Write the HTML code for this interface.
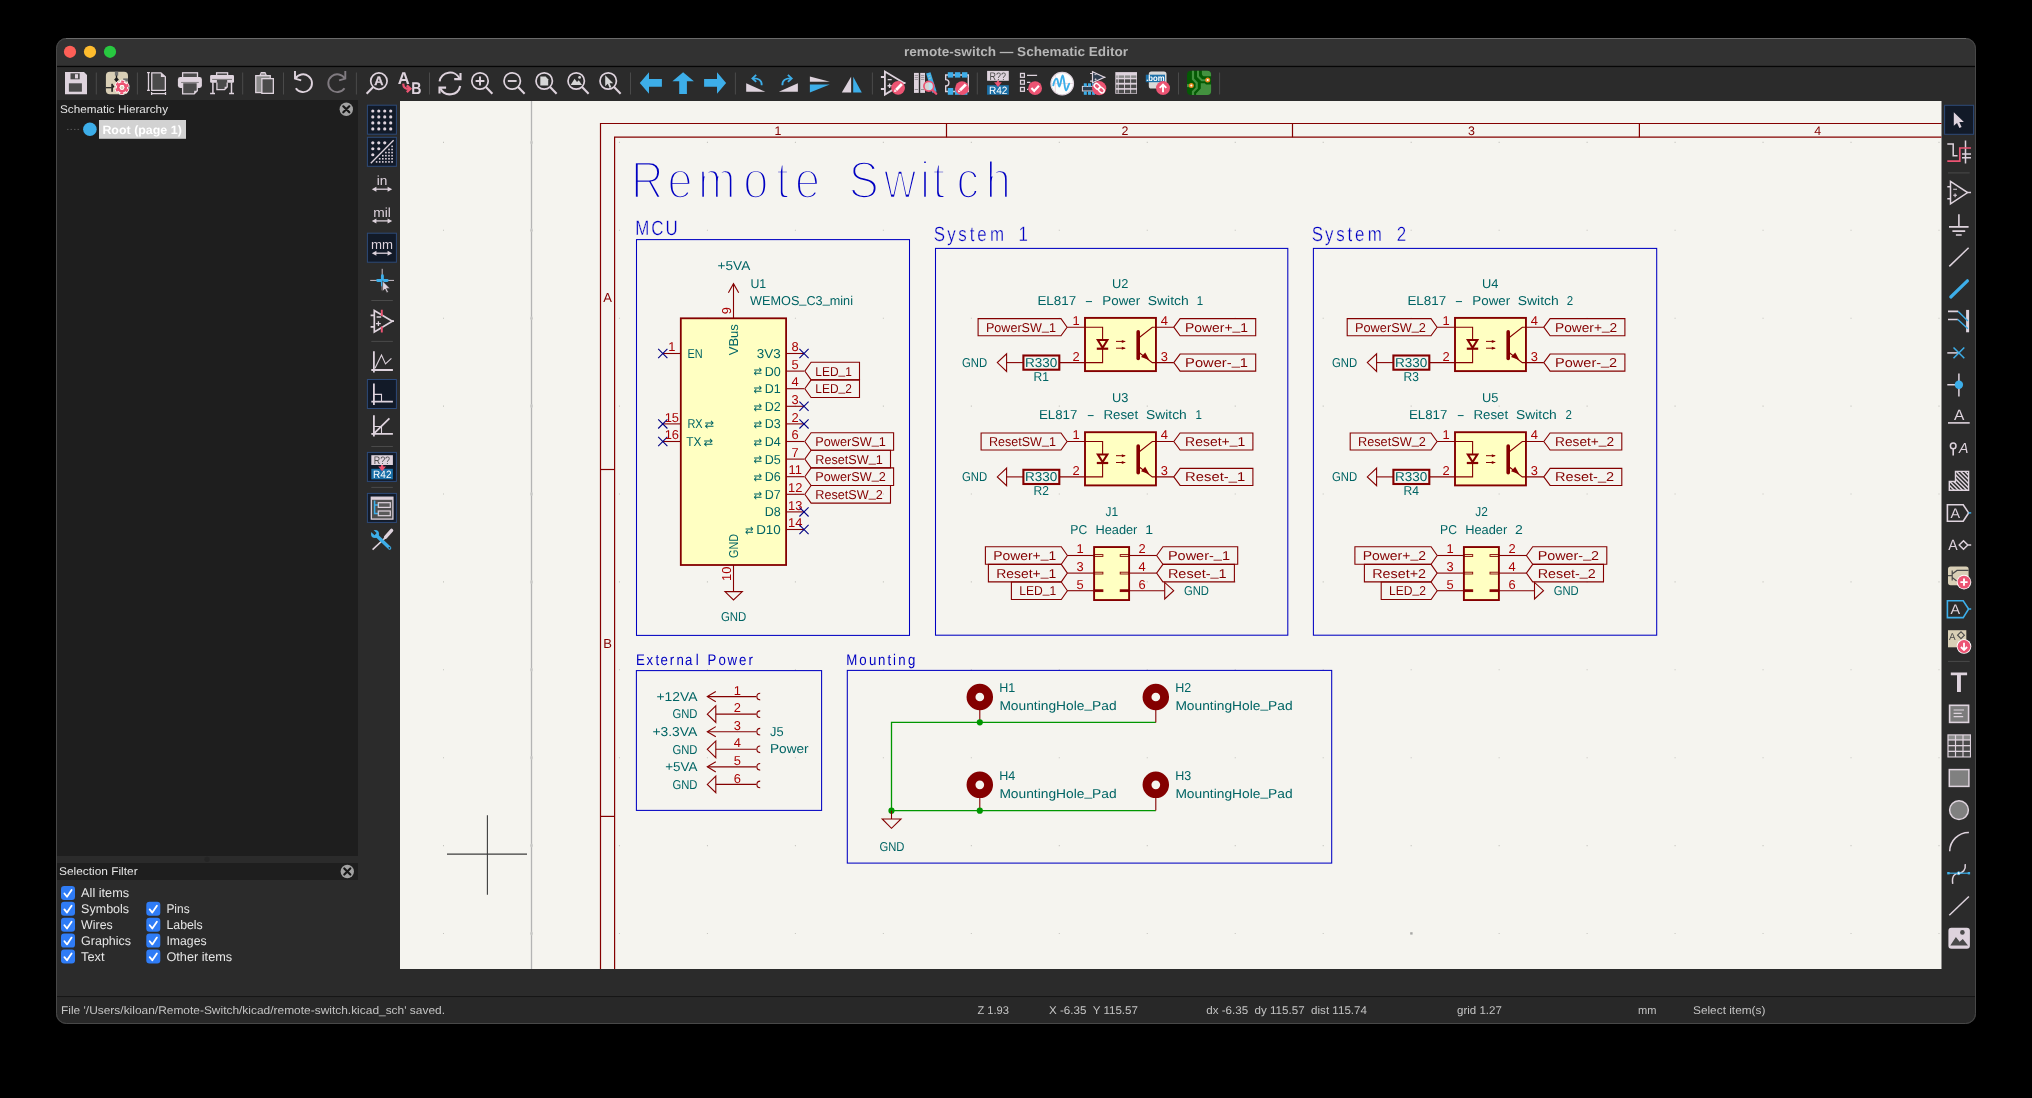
<!DOCTYPE html><html><head><meta charset="utf-8"><title>remote-switch — Schematic Editor</title>
<style>html,body{margin:0;padding:0;background:#000;width:2032px;height:1098px;overflow:hidden}svg{display:block}body>svg{will-change:transform}text{font-family:"Liberation Sans","DejaVu Sans",sans-serif;text-rendering:geometricPrecision}</style></head><body>
<svg width="2032" height="1098" viewBox="0 0 2032 1098">
<rect width="2032" height="1098" fill="#000"/>
<rect x="56" y="38" width="1920" height="986" rx="10.5" fill="#2b2b2b"/>
<clipPath id="wc"><rect x="56" y="38" width="1920" height="986" rx="10.5"/></clipPath>
<g clip-path="url(#wc)">
<rect x="56" y="38" width="1920" height="28.4" fill="#323232"/>
<rect x="56" y="65.8" width="1920" height="1.5" fill="#060606"/>
<rect x="56" y="67.3" width="1920" height="33" fill="#2b2b2b"/>
<rect x="56" y="100" width="302" height="756" fill="#1e1e1e"/>
<rect x="56" y="863" width="302" height="17" fill="#1e1e1e"/>
<circle cx="207" cy="859.3" r="2.6" fill="#252525"/>
<rect x="400" y="101" width="1541.5" height="868" fill="#f5f4ef"/>
<rect x="56" y="996" width="1920" height="1.2" fill="#161616"/>
<rect x="56" y="997.2" width="1920" height="27" fill="#282828"/>
</g>
<rect x="56.5" y="38.5" width="1919" height="985" rx="10" fill="none" stroke="#484848" stroke-width="1"/>
<path d="M66 38.5H1966" stroke="#6a6a6a" stroke-width="1"/>
<circle cx="70" cy="51.8" r="6.1" fill="#fe5f57"/>
<circle cx="90" cy="51.8" r="6.1" fill="#febc2e"/>
<circle cx="110" cy="51.8" r="6.1" fill="#28c840"/>
<text x="1016" y="56.2" font-size="13" fill="#b6b6b6" text-anchor="middle" textLength="224" lengthAdjust="spacingAndGlyphs" font-weight="bold">remote-switch — Schematic Editor</text>
<line x1="96.3" y1="72.5" x2="96.3" y2="94.5" stroke="#4a4a4a" stroke-width="1"/>
<line x1="137.4" y1="72.5" x2="137.4" y2="94.5" stroke="#4a4a4a" stroke-width="1"/>
<line x1="242.7" y1="72.5" x2="242.7" y2="94.5" stroke="#4a4a4a" stroke-width="1"/>
<line x1="283.5" y1="72.5" x2="283.5" y2="94.5" stroke="#4a4a4a" stroke-width="1"/>
<line x1="356.4" y1="72.5" x2="356.4" y2="94.5" stroke="#4a4a4a" stroke-width="1"/>
<line x1="429.5" y1="72.5" x2="429.5" y2="94.5" stroke="#4a4a4a" stroke-width="1"/>
<line x1="630.5" y1="72.5" x2="630.5" y2="94.5" stroke="#4a4a4a" stroke-width="1"/>
<line x1="735.4" y1="72.5" x2="735.4" y2="94.5" stroke="#4a4a4a" stroke-width="1"/>
<line x1="872.4" y1="72.5" x2="872.4" y2="94.5" stroke="#4a4a4a" stroke-width="1"/>
<line x1="977.3" y1="72.5" x2="977.3" y2="94.5" stroke="#4a4a4a" stroke-width="1"/>
<line x1="1178.5" y1="72.5" x2="1178.5" y2="94.5" stroke="#4a4a4a" stroke-width="1"/>
<line x1="1219.6" y1="72.5" x2="1219.6" y2="94.5" stroke="#4a4a4a" stroke-width="1"/>
<text x="60" y="113" font-size="11.2" fill="#e4e4e4" textLength="108" lengthAdjust="spacingAndGlyphs">Schematic Hierarchy</text>
<circle cx="346.3" cy="109.3" r="6.7" fill="#a2a2a2"/>
<path d="M343.3 106.3l6 6m0 -6l-6 6" stroke="#161616" stroke-width="2.2" fill="none" stroke-linecap="round"/>
<line x1="67" y1="129.4" x2="81" y2="129.4" stroke="#5a5a5a" stroke-width="1" stroke-dasharray="1.5 2"/>
<circle cx="89.9" cy="129.2" r="6.8" fill="#3daee9"/>
<rect x="99" y="120" width="87" height="18.8" fill="#d2d2d2"/>
<text x="102.4" y="133.6" font-size="12" fill="#ffffff" textLength="79.4" lengthAdjust="spacingAndGlyphs" font-weight="bold">Root (page 1)</text>
<text x="59" y="875.2" font-size="11.2" fill="#e4e4e4" textLength="78.6" lengthAdjust="spacingAndGlyphs">Selection Filter</text>
<circle cx="347.3" cy="871.5" r="6.7" fill="#a2a2a2"/>
<path d="M344.3 868.5l6 6m0 -6l-6 6" stroke="#161616" stroke-width="2.2" fill="none" stroke-linecap="round"/>
<rect x="61" y="885.9" width="14" height="14" rx="3.2" fill="#2f7cf6"/>
<path d="M64.4 893.5l2.6 3.2l4.6 -6.8" stroke="#ffffff" stroke-width="1.8" fill="none" stroke-linecap="round" stroke-linejoin="round"/>
<text x="81.1" y="897.3" font-size="12.6" fill="#e6e6e6" textLength="48" lengthAdjust="spacingAndGlyphs">All items</text>
<rect x="61" y="901.8" width="14" height="14" rx="3.2" fill="#2f7cf6"/>
<path d="M64.4 909.4l2.6 3.2l4.6 -6.8" stroke="#ffffff" stroke-width="1.8" fill="none" stroke-linecap="round" stroke-linejoin="round"/>
<text x="81.1" y="913.2" font-size="12.6" fill="#e6e6e6" textLength="48" lengthAdjust="spacingAndGlyphs">Symbols</text>
<rect x="61" y="917.7" width="14" height="14" rx="3.2" fill="#2f7cf6"/>
<path d="M64.4 925.3l2.6 3.2l4.6 -6.8" stroke="#ffffff" stroke-width="1.8" fill="none" stroke-linecap="round" stroke-linejoin="round"/>
<text x="81.1" y="929.1" font-size="12.6" fill="#e6e6e6" textLength="31.6" lengthAdjust="spacingAndGlyphs">Wires</text>
<rect x="61" y="933.6" width="14" height="14" rx="3.2" fill="#2f7cf6"/>
<path d="M64.4 941.2l2.6 3.2l4.6 -6.8" stroke="#ffffff" stroke-width="1.8" fill="none" stroke-linecap="round" stroke-linejoin="round"/>
<text x="81.1" y="945" font-size="12.6" fill="#e6e6e6" textLength="50" lengthAdjust="spacingAndGlyphs">Graphics</text>
<rect x="61" y="949.5" width="14" height="14" rx="3.2" fill="#2f7cf6"/>
<path d="M64.4 957.1l2.6 3.2l4.6 -6.8" stroke="#ffffff" stroke-width="1.8" fill="none" stroke-linecap="round" stroke-linejoin="round"/>
<text x="81.1" y="960.9" font-size="12.6" fill="#e6e6e6" textLength="23.4" lengthAdjust="spacingAndGlyphs">Text</text>
<rect x="146.3" y="901.8" width="14" height="14" rx="3.2" fill="#2f7cf6"/>
<path d="M149.7 909.4l2.6 3.2l4.6 -6.8" stroke="#ffffff" stroke-width="1.8" fill="none" stroke-linecap="round" stroke-linejoin="round"/>
<text x="166.4" y="913.2" font-size="12.6" fill="#e6e6e6" textLength="23.2" lengthAdjust="spacingAndGlyphs">Pins</text>
<rect x="146.3" y="917.7" width="14" height="14" rx="3.2" fill="#2f7cf6"/>
<path d="M149.7 925.3l2.6 3.2l4.6 -6.8" stroke="#ffffff" stroke-width="1.8" fill="none" stroke-linecap="round" stroke-linejoin="round"/>
<text x="166.4" y="929.1" font-size="12.6" fill="#e6e6e6" textLength="36.4" lengthAdjust="spacingAndGlyphs">Labels</text>
<rect x="146.3" y="933.6" width="14" height="14" rx="3.2" fill="#2f7cf6"/>
<path d="M149.7 941.2l2.6 3.2l4.6 -6.8" stroke="#ffffff" stroke-width="1.8" fill="none" stroke-linecap="round" stroke-linejoin="round"/>
<text x="166.4" y="945" font-size="12.6" fill="#e6e6e6" textLength="40.2" lengthAdjust="spacingAndGlyphs">Images</text>
<rect x="146.3" y="949.5" width="14" height="14" rx="3.2" fill="#2f7cf6"/>
<path d="M149.7 957.1l2.6 3.2l4.6 -6.8" stroke="#ffffff" stroke-width="1.8" fill="none" stroke-linecap="round" stroke-linejoin="round"/>
<text x="166.4" y="960.9" font-size="12.6" fill="#e6e6e6" textLength="65.8" lengthAdjust="spacingAndGlyphs">Other items</text>
<text x="61" y="1014" font-size="11.2" fill="#c4c4c4" textLength="384" lengthAdjust="spacingAndGlyphs" xml:space="preserve">File '/Users/kiloan/Remote-Switch/kicad/remote-switch.kicad_sch' saved.</text>
<text x="977.4" y="1014" font-size="11.2" fill="#c4c4c4" textLength="31.6" lengthAdjust="spacingAndGlyphs" xml:space="preserve">Z 1.93</text>
<text x="1049" y="1014" font-size="11.2" fill="#c4c4c4" textLength="89" lengthAdjust="spacingAndGlyphs" xml:space="preserve">X -6.35  Y 115.57</text>
<text x="1206.2" y="1014" font-size="11.2" fill="#c4c4c4" textLength="160.8" lengthAdjust="spacingAndGlyphs" xml:space="preserve">dx -6.35  dy 115.57  dist 115.74</text>
<text x="1457" y="1014" font-size="11.2" fill="#c4c4c4" textLength="44.8" lengthAdjust="spacingAndGlyphs" xml:space="preserve">grid 1.27</text>
<text x="1638.1" y="1014" font-size="11.2" fill="#c4c4c4" textLength="18.4" lengthAdjust="spacingAndGlyphs" xml:space="preserve">mm</text>
<text x="1693" y="1014" font-size="11.2" fill="#c4c4c4" textLength="72.4" lengthAdjust="spacingAndGlyphs" xml:space="preserve">Select item(s)</text>
<svg x="400" y="101" width="1541.5" height="868" viewBox="400 101 1541.5 868">
<line x1="531.5" y1="101" x2="531.5" y2="969" stroke="#b4b4b4" stroke-width="1.3"/>
<path d="M443 142.4h1M443 230.3h1M443 318.2h1M443 406.1h1M443 494h1M443 581.9h1M443 669.8h1M443 757.7h1M443 845.6h1M443 933.5h1M530.97 142.4h1M530.97 230.3h1M530.97 318.2h1M530.97 406.1h1M530.97 494h1M530.97 581.9h1M530.97 669.8h1M530.97 757.7h1M530.97 845.6h1M530.97 933.5h1M618.94 142.4h1M618.94 230.3h1M618.94 318.2h1M618.94 406.1h1M618.94 494h1M618.94 581.9h1M618.94 669.8h1M618.94 757.7h1M618.94 845.6h1M618.94 933.5h1M706.91 142.4h1M706.91 230.3h1M706.91 318.2h1M706.91 406.1h1M706.91 494h1M706.91 581.9h1M706.91 669.8h1M706.91 757.7h1M706.91 845.6h1M706.91 933.5h1M794.88 142.4h1M794.88 230.3h1M794.88 318.2h1M794.88 406.1h1M794.88 494h1M794.88 581.9h1M794.88 669.8h1M794.88 757.7h1M794.88 845.6h1M794.88 933.5h1M882.85 142.4h1M882.85 230.3h1M882.85 318.2h1M882.85 406.1h1M882.85 494h1M882.85 581.9h1M882.85 669.8h1M882.85 757.7h1M882.85 845.6h1M882.85 933.5h1M970.82 142.4h1M970.82 230.3h1M970.82 318.2h1M970.82 406.1h1M970.82 494h1M970.82 581.9h1M970.82 669.8h1M970.82 757.7h1M970.82 845.6h1M970.82 933.5h1M1058.79 142.4h1M1058.79 230.3h1M1058.79 318.2h1M1058.79 406.1h1M1058.79 494h1M1058.79 581.9h1M1058.79 669.8h1M1058.79 757.7h1M1058.79 845.6h1M1058.79 933.5h1M1146.76 142.4h1M1146.76 230.3h1M1146.76 318.2h1M1146.76 406.1h1M1146.76 494h1M1146.76 581.9h1M1146.76 669.8h1M1146.76 757.7h1M1146.76 845.6h1M1146.76 933.5h1M1234.73 142.4h1M1234.73 230.3h1M1234.73 318.2h1M1234.73 406.1h1M1234.73 494h1M1234.73 581.9h1M1234.73 669.8h1M1234.73 757.7h1M1234.73 845.6h1M1234.73 933.5h1M1322.7 142.4h1M1322.7 230.3h1M1322.7 318.2h1M1322.7 406.1h1M1322.7 494h1M1322.7 581.9h1M1322.7 669.8h1M1322.7 757.7h1M1322.7 845.6h1M1322.7 933.5h1M1410.67 142.4h1M1410.67 230.3h1M1410.67 318.2h1M1410.67 406.1h1M1410.67 494h1M1410.67 581.9h1M1410.67 669.8h1M1410.67 757.7h1M1410.67 845.6h1M1410.67 933.5h1M1498.64 142.4h1M1498.64 230.3h1M1498.64 318.2h1M1498.64 406.1h1M1498.64 494h1M1498.64 581.9h1M1498.64 669.8h1M1498.64 757.7h1M1498.64 845.6h1M1498.64 933.5h1M1586.61 142.4h1M1586.61 230.3h1M1586.61 318.2h1M1586.61 406.1h1M1586.61 494h1M1586.61 581.9h1M1586.61 669.8h1M1586.61 757.7h1M1586.61 845.6h1M1586.61 933.5h1M1674.58 142.4h1M1674.58 230.3h1M1674.58 318.2h1M1674.58 406.1h1M1674.58 494h1M1674.58 581.9h1M1674.58 669.8h1M1674.58 757.7h1M1674.58 845.6h1M1674.58 933.5h1M1762.55 142.4h1M1762.55 230.3h1M1762.55 318.2h1M1762.55 406.1h1M1762.55 494h1M1762.55 581.9h1M1762.55 669.8h1M1762.55 757.7h1M1762.55 845.6h1M1762.55 933.5h1M1850.52 142.4h1M1850.52 230.3h1M1850.52 318.2h1M1850.52 406.1h1M1850.52 494h1M1850.52 581.9h1M1850.52 669.8h1M1850.52 757.7h1M1850.52 845.6h1M1850.52 933.5h1M1938.49 142.4h1M1938.49 230.3h1M1938.49 318.2h1M1938.49 406.1h1M1938.49 494h1M1938.49 581.9h1M1938.49 669.8h1M1938.49 757.7h1M1938.49 845.6h1M1938.49 933.5h1" stroke="#c4c3be" stroke-width="1.1" fill="none"/>
<ellipse cx="531.5" cy="142.4" rx="1.3" ry="2" fill="#c9c9c7"/>
<ellipse cx="531.5" cy="230.3" rx="1.3" ry="2" fill="#c9c9c7"/>
<ellipse cx="531.5" cy="318.2" rx="1.3" ry="2" fill="#c9c9c7"/>
<ellipse cx="531.5" cy="406.1" rx="1.3" ry="2" fill="#c9c9c7"/>
<ellipse cx="531.5" cy="494" rx="1.3" ry="2" fill="#c9c9c7"/>
<ellipse cx="531.5" cy="581.9" rx="1.3" ry="2" fill="#c9c9c7"/>
<ellipse cx="531.5" cy="669.8" rx="1.3" ry="2" fill="#c9c9c7"/>
<ellipse cx="531.5" cy="757.7" rx="1.3" ry="2" fill="#c9c9c7"/>
<ellipse cx="531.5" cy="845.6" rx="1.3" ry="2" fill="#c9c9c7"/>
<ellipse cx="531.5" cy="933.5" rx="1.3" ry="2" fill="#c9c9c7"/>
<rect x="1410.2" y="932.2" width="2.4" height="2.4" fill="#a8a8a6"/>
<path d="M2000 123.5H600.5V1000M2000 137.2H614.6V1000" stroke="#840000" stroke-width="1.2" fill="none"/>
<line x1="946.5" y1="123.5" x2="946.5" y2="137.2" stroke="#840000" stroke-width="1.2"/>
<line x1="1292.5" y1="123.5" x2="1292.5" y2="137.2" stroke="#840000" stroke-width="1.2"/>
<line x1="1639.4" y1="123.5" x2="1639.4" y2="137.2" stroke="#840000" stroke-width="1.2"/>
<line x1="600.5" y1="469.5" x2="614.6" y2="469.5" stroke="#840000" stroke-width="1.2"/>
<line x1="600.5" y1="816.4" x2="614.6" y2="816.4" stroke="#840000" stroke-width="1.2"/>
<text x="778" y="134.7" font-size="12.4" fill="#840000" text-anchor="middle">1</text>
<text x="1125" y="134.7" font-size="12.4" fill="#840000" text-anchor="middle">2</text>
<text x="1471.4" y="134.7" font-size="12.4" fill="#840000" text-anchor="middle">3</text>
<text x="1817.6" y="134.7" font-size="12.4" fill="#840000" text-anchor="middle">4</text>
<text x="607.5" y="301.8" font-size="13" fill="#840000" text-anchor="middle">A</text>
<text x="607.7" y="647.6" font-size="13" fill="#840000" text-anchor="middle">B</text>
<line x1="487.4" y1="815.2" x2="487.4" y2="894.7" stroke="#3c3c3c" stroke-width="1.1"/>
<line x1="447" y1="854.1" x2="527" y2="854.1" stroke="#3c3c3c" stroke-width="1.1"/>
<text transform="scale(0.86 1)" x="733.72 776.05 811.63 864.19 902.67 924.3 955.81 986.98 1027.56 1069.88 1084.42 1112.33 1146.28" y="198.2" font-size="52.4" fill="#0000c2" stroke="#f5f4ef" stroke-width="2.7">Remote Switch</text>
<rect x="636.5" y="239.6" width="273" height="395.8" stroke="#0000c2" stroke-width="1.05" fill="none"/>
<text transform="scale(0.82 1)" x="774.71 794.26 811.71" y="235.2" font-size="20.6" fill="#0000c2" stroke="#f5f4ef" stroke-width="0.3">MCU</text>
<rect x="680.8" y="318.3" width="105.3" height="246.7" stroke="#840000" stroke-width="1.8" fill="#ffffc2"/>
<line x1="733.5" y1="318.3" x2="733.5" y2="283.9" stroke="#840000" stroke-width="1.1"/>
<path d="M728.4 292.8L733.5 283.7L738.7 292.8" stroke="#840000" stroke-width="1.1" fill="none"/>
<text x="733.9" y="270" font-size="12.9" fill="#006464" text-anchor="middle" textLength="32.6" lengthAdjust="spacingAndGlyphs">+5VA</text>
<text x="731.3" y="310.6" font-size="12.9" fill="#a90000" text-anchor="middle" transform="rotate(-90 731.3 310.6)">9</text>
<text x="750.4" y="287.7" font-size="12.9" fill="#006464" textLength="15.8" lengthAdjust="spacingAndGlyphs">U1</text>
<text x="750" y="304.7" font-size="12.9" fill="#006464" textLength="103" lengthAdjust="spacingAndGlyphs">WEMOS<tspan dy="-1.7">_</tspan><tspan dy="1.7">C</tspan>3<tspan dy="-1.7">_</tspan><tspan dy="1.7">m</tspan>ini</text>
<text x="738" y="355.3" font-size="12.9" fill="#006464" textLength="31.2" lengthAdjust="spacingAndGlyphs" transform="rotate(-90 738 355.3)">VBus</text>
<text x="738" y="558" font-size="12.9" fill="#006464" textLength="24" lengthAdjust="spacingAndGlyphs" transform="rotate(-90 738 558)">GND</text>
<line x1="680.8" y1="353.5" x2="662.8" y2="353.5" stroke="#840000" stroke-width="1.1"/>
<path d="M658.2 348.9L667.4 358.1M658.2 358.1L667.4 348.9" stroke="#000084" stroke-width="1.1" fill="none"/>
<text x="671.8" y="351.3" font-size="12.9" fill="#a90000" text-anchor="middle">1</text>
<text x="687.4" y="358" font-size="12.9" fill="#006464" textLength="15.2" lengthAdjust="spacingAndGlyphs">EN</text>
<line x1="680.8" y1="423.9" x2="662.8" y2="423.9" stroke="#840000" stroke-width="1.1"/>
<path d="M658.2 419.3L667.4 428.5M658.2 428.5L667.4 419.3" stroke="#000084" stroke-width="1.1" fill="none"/>
<text x="671.8" y="421.7" font-size="12.9" fill="#a90000" text-anchor="middle">15</text>
<text x="687.4" y="428.4" font-size="12.9" fill="#006464" textLength="15.2" lengthAdjust="spacingAndGlyphs">RX</text>
<text x="704.6" y="428.4" font-size="11" fill="#006464" textLength="9.6" lengthAdjust="spacingAndGlyphs">⇄</text>
<line x1="680.8" y1="441.5" x2="662.8" y2="441.5" stroke="#840000" stroke-width="1.1"/>
<path d="M658.2 436.9L667.4 446.1M658.2 446.1L667.4 436.9" stroke="#000084" stroke-width="1.1" fill="none"/>
<text x="671.8" y="439.3" font-size="12.9" fill="#a90000" text-anchor="middle">16</text>
<text x="686.2" y="446" font-size="12.9" fill="#006464" textLength="15.2" lengthAdjust="spacingAndGlyphs">TX</text>
<text x="703.4" y="446" font-size="11" fill="#006464" textLength="9.6" lengthAdjust="spacingAndGlyphs">⇄</text>
<line x1="786.1" y1="353.5" x2="804" y2="353.5" stroke="#840000" stroke-width="1.1"/>
<text x="795.2" y="351.2" font-size="12.9" fill="#a90000" text-anchor="middle">8</text>
<text x="780.8" y="358" font-size="12.9" fill="#006464" text-anchor="end" textLength="24" lengthAdjust="spacingAndGlyphs">3V3</text>
<path d="M799.4 348.9L808.6 358.1M799.4 358.1L808.6 348.9" stroke="#000084" stroke-width="1.1" fill="none"/>
<line x1="786.1" y1="371.1" x2="804" y2="371.1" stroke="#840000" stroke-width="1.1"/>
<text x="795.2" y="368.8" font-size="12.9" fill="#a90000" text-anchor="middle">5</text>
<text x="780.8" y="375.6" font-size="12.9" fill="#006464" text-anchor="end" textLength="16" lengthAdjust="spacingAndGlyphs">D0</text>
<text x="762.2" y="375.4" font-size="11" fill="#006464" text-anchor="end" textLength="8.6" lengthAdjust="spacingAndGlyphs">⇄</text>
<polygon points="804.8,371.1 811.1,362.3 859.5,362.3 859.5,379.9 811.1,379.9" fill="none" stroke="#840000" stroke-width="1.1"/>
<text x="815.3" y="375.5" font-size="12.9" fill="#840000" textLength="36.5" lengthAdjust="spacingAndGlyphs">LED<tspan dy="-1.7">_</tspan><tspan dy="1.7">1</tspan></text>
<line x1="786.1" y1="388.7" x2="804" y2="388.7" stroke="#840000" stroke-width="1.1"/>
<text x="795.2" y="386.4" font-size="12.9" fill="#a90000" text-anchor="middle">4</text>
<text x="780.8" y="393.2" font-size="12.9" fill="#006464" text-anchor="end" textLength="16" lengthAdjust="spacingAndGlyphs">D1</text>
<text x="762.2" y="393" font-size="11" fill="#006464" text-anchor="end" textLength="8.6" lengthAdjust="spacingAndGlyphs">⇄</text>
<polygon points="804.8,388.7 811.1,379.9 859.5,379.9 859.5,397.5 811.1,397.5" fill="none" stroke="#840000" stroke-width="1.1"/>
<text x="815.3" y="393.1" font-size="12.9" fill="#840000" textLength="36.5" lengthAdjust="spacingAndGlyphs">LED<tspan dy="-1.7">_</tspan><tspan dy="1.7">2</tspan></text>
<line x1="786.1" y1="406.3" x2="804" y2="406.3" stroke="#840000" stroke-width="1.1"/>
<text x="795.2" y="404" font-size="12.9" fill="#a90000" text-anchor="middle">3</text>
<text x="780.8" y="410.8" font-size="12.9" fill="#006464" text-anchor="end" textLength="16" lengthAdjust="spacingAndGlyphs">D2</text>
<text x="762.2" y="410.6" font-size="11" fill="#006464" text-anchor="end" textLength="8.6" lengthAdjust="spacingAndGlyphs">⇄</text>
<path d="M799.4 401.7L808.6 410.9M799.4 410.9L808.6 401.7" stroke="#000084" stroke-width="1.1" fill="none"/>
<line x1="786.1" y1="423.9" x2="804" y2="423.9" stroke="#840000" stroke-width="1.1"/>
<text x="795.2" y="421.6" font-size="12.9" fill="#a90000" text-anchor="middle">2</text>
<text x="780.8" y="428.4" font-size="12.9" fill="#006464" text-anchor="end" textLength="16" lengthAdjust="spacingAndGlyphs">D3</text>
<text x="762.2" y="428.2" font-size="11" fill="#006464" text-anchor="end" textLength="8.6" lengthAdjust="spacingAndGlyphs">⇄</text>
<path d="M799.4 419.3L808.6 428.5M799.4 428.5L808.6 419.3" stroke="#000084" stroke-width="1.1" fill="none"/>
<line x1="786.1" y1="441.5" x2="804" y2="441.5" stroke="#840000" stroke-width="1.1"/>
<text x="795.2" y="439.2" font-size="12.9" fill="#a90000" text-anchor="middle">6</text>
<text x="780.8" y="446" font-size="12.9" fill="#006464" text-anchor="end" textLength="16" lengthAdjust="spacingAndGlyphs">D4</text>
<text x="762.2" y="445.8" font-size="11" fill="#006464" text-anchor="end" textLength="8.6" lengthAdjust="spacingAndGlyphs">⇄</text>
<polygon points="804.8,441.5 811.1,432.7 893.6,432.7 893.6,450.3 811.1,450.3" fill="none" stroke="#840000" stroke-width="1.1"/>
<text x="815.3" y="445.9" font-size="12.9" fill="#840000" textLength="70.6" lengthAdjust="spacingAndGlyphs">PowerSW<tspan dy="-1.7">_</tspan><tspan dy="1.7">1</tspan></text>
<line x1="786.1" y1="459.1" x2="804" y2="459.1" stroke="#840000" stroke-width="1.1"/>
<text x="795.2" y="456.8" font-size="12.9" fill="#a90000" text-anchor="middle">7</text>
<text x="780.8" y="463.6" font-size="12.9" fill="#006464" text-anchor="end" textLength="16" lengthAdjust="spacingAndGlyphs">D5</text>
<text x="762.2" y="463.4" font-size="11" fill="#006464" text-anchor="end" textLength="8.6" lengthAdjust="spacingAndGlyphs">⇄</text>
<polygon points="804.8,459.1 811.1,450.3 890.5,450.3 890.5,467.9 811.1,467.9" fill="none" stroke="#840000" stroke-width="1.1"/>
<text x="815.3" y="463.5" font-size="12.9" fill="#840000" textLength="67.5" lengthAdjust="spacingAndGlyphs">ResetSW<tspan dy="-1.7">_</tspan><tspan dy="1.7">1</tspan></text>
<line x1="786.1" y1="476.7" x2="804" y2="476.7" stroke="#840000" stroke-width="1.1"/>
<text x="795.2" y="474.4" font-size="12.9" fill="#a90000" text-anchor="middle">11</text>
<text x="780.8" y="481.2" font-size="12.9" fill="#006464" text-anchor="end" textLength="16" lengthAdjust="spacingAndGlyphs">D6</text>
<text x="762.2" y="481" font-size="11" fill="#006464" text-anchor="end" textLength="8.6" lengthAdjust="spacingAndGlyphs">⇄</text>
<polygon points="804.8,476.7 811.1,467.9 893.6,467.9 893.6,485.5 811.1,485.5" fill="none" stroke="#840000" stroke-width="1.1"/>
<text x="815.3" y="481.1" font-size="12.9" fill="#840000" textLength="70.6" lengthAdjust="spacingAndGlyphs">PowerSW<tspan dy="-1.7">_</tspan><tspan dy="1.7">2</tspan></text>
<line x1="786.1" y1="494.3" x2="804" y2="494.3" stroke="#840000" stroke-width="1.1"/>
<text x="795.2" y="492" font-size="12.9" fill="#a90000" text-anchor="middle">12</text>
<text x="780.8" y="498.8" font-size="12.9" fill="#006464" text-anchor="end" textLength="16" lengthAdjust="spacingAndGlyphs">D7</text>
<text x="762.2" y="498.6" font-size="11" fill="#006464" text-anchor="end" textLength="8.6" lengthAdjust="spacingAndGlyphs">⇄</text>
<polygon points="804.8,494.3 811.1,485.5 890.5,485.5 890.5,503.1 811.1,503.1" fill="none" stroke="#840000" stroke-width="1.1"/>
<text x="815.3" y="498.7" font-size="12.9" fill="#840000" textLength="67.5" lengthAdjust="spacingAndGlyphs">ResetSW<tspan dy="-1.7">_</tspan><tspan dy="1.7">2</tspan></text>
<line x1="786.1" y1="511.9" x2="804" y2="511.9" stroke="#840000" stroke-width="1.1"/>
<text x="795.2" y="509.6" font-size="12.9" fill="#a90000" text-anchor="middle">13</text>
<text x="780.8" y="516.4" font-size="12.9" fill="#006464" text-anchor="end" textLength="16" lengthAdjust="spacingAndGlyphs">D8</text>
<path d="M799.4 507.3L808.6 516.5M799.4 516.5L808.6 507.3" stroke="#000084" stroke-width="1.1" fill="none"/>
<line x1="786.1" y1="529.5" x2="804" y2="529.5" stroke="#840000" stroke-width="1.1"/>
<text x="795.2" y="527.2" font-size="12.9" fill="#a90000" text-anchor="middle">14</text>
<text x="780.8" y="534" font-size="12.9" fill="#006464" text-anchor="end" textLength="24.6" lengthAdjust="spacingAndGlyphs">D10</text>
<text x="753.6" y="533.8" font-size="11" fill="#006464" text-anchor="end" textLength="8.6" lengthAdjust="spacingAndGlyphs">⇄</text>
<path d="M799.4 524.9L808.6 534.1M799.4 534.1L808.6 524.9" stroke="#000084" stroke-width="1.1" fill="none"/>
<line x1="733.5" y1="565" x2="733.5" y2="591.6" stroke="#840000" stroke-width="1.1"/>
<path d="M725 591.6H742.3L733.5 599.9Z" stroke="#840000" stroke-width="1.1" fill="none"/>
<text x="731.3" y="573.7" font-size="12.9" fill="#a90000" text-anchor="middle" transform="rotate(-90 731.3 573.7)">10</text>
<text x="733.6" y="621.3" font-size="12.9" fill="#006464" text-anchor="middle" textLength="25.4" lengthAdjust="spacingAndGlyphs">GND</text>
<rect x="935.5" y="248.4" width="352.3" height="386.8" stroke="#0000c2" stroke-width="1.05" fill="none"/>
<text transform="scale(0.82 1)" x="1138.87 1155.09 1168.72 1182.55 1191.85 1207.39 1224.55 1242.16" y="241.1" font-size="20.6" fill="#0000c2" stroke="#f5f4ef" stroke-width="0.3">System 1</text>
<text x="1120.2" y="287.9" font-size="12.9" fill="#006464" text-anchor="middle" textLength="16.4" lengthAdjust="spacingAndGlyphs">U2</text>
<text y="305" font-size="12.9" fill="#006464"><tspan x="1037.4" textLength="38.8" lengthAdjust="spacingAndGlyphs">EL817</tspan> <tspan x="1084.8" textLength="8.4" lengthAdjust="spacingAndGlyphs">-</tspan> <tspan x="1102.3" textLength="37.9" lengthAdjust="spacingAndGlyphs">Power</tspan> <tspan x="1147.7" textLength="41.1" lengthAdjust="spacingAndGlyphs">Switch</tspan> <tspan x="1196.8" textLength="6.4" lengthAdjust="spacingAndGlyphs">1</tspan></text>
<rect x="1085" y="317.9" width="70.95" height="53.2" stroke="#840000" stroke-width="1.9" fill="#ffffc2"/>
<path d="M1067.1 327.2H1102.6V362.6H1059.4" stroke="#840000" stroke-width="1.1" fill="none"/>
<polygon points="1097.8,340.1 1107.4,340.1 1102.6,347.8" fill="#ffffc2" stroke="#840000" stroke-width="2" stroke-linejoin="miter"/>
<line x1="1096.8" y1="348.7" x2="1108.2" y2="348.7" stroke="#840000" stroke-width="2.2"/>
<line x1="1116" y1="341.4" x2="1125.2" y2="341.4" stroke="#840000" stroke-width="1"/>
<polygon points="1125.6,341.4 1121.8,339.9 1121.8,342.9" fill="#840000"/>
<line x1="1116" y1="348.2" x2="1125.2" y2="348.2" stroke="#840000" stroke-width="1"/>
<polygon points="1125.6,348.2 1121.8,346.7 1121.8,349.7" fill="#840000"/>
<line x1="1138.2" y1="331.8" x2="1138.2" y2="358.4" stroke="#840000" stroke-width="3.6" stroke-linecap="round"/>
<path d="M1139 337.7L1152.3 327.2H1173.8" stroke="#840000" stroke-width="1.1" fill="none"/>
<path d="M1139 352.5L1152.3 362.6H1173.8" stroke="#840000" stroke-width="1.1" fill="none"/>
<polygon points="1149.4,360 1141,357 1145.2,352.4" fill="#840000"/>
<text x="1076" y="325.1" font-size="12.9" fill="#a90000" text-anchor="middle">1</text>
<text x="1076" y="360.5" font-size="12.9" fill="#a90000" text-anchor="middle">2</text>
<text x="1164.4" y="325.1" font-size="12.9" fill="#a90000" text-anchor="middle">4</text>
<text x="1164.4" y="360.5" font-size="12.9" fill="#a90000" text-anchor="middle">3</text>
<polygon points="1067.1,327.2 1061,318.65 978.1,318.65 978.1,335.75 1061,335.75" fill="none" stroke="#840000" stroke-width="1.1"/>
<text x="985.9" y="331.6" font-size="12.9" fill="#840000" textLength="70" lengthAdjust="spacingAndGlyphs">PowerSW<tspan dy="-1.7">_</tspan><tspan dy="1.7">1</tspan></text>
<polygon points="1173.8,327.2 1180.1,318.65 1255.7,318.65 1255.7,335.75 1180.1,335.75" fill="none" stroke="#840000" stroke-width="1.1"/>
<text x="1185.1" y="331.6" font-size="12.9" fill="#840000" textLength="62.9" lengthAdjust="spacingAndGlyphs">Power+<tspan dy="-1.7">_</tspan><tspan dy="1.7">1</tspan></text>
<polygon points="1173.8,362.6 1180.1,354.05 1255.7,354.05 1255.7,371.15 1180.1,371.15" fill="none" stroke="#840000" stroke-width="1.1"/>
<text x="1185.1" y="367" font-size="12.9" fill="#840000" textLength="62.9" lengthAdjust="spacingAndGlyphs">Power-<tspan dy="-1.7">_</tspan><tspan dy="1.7">1</tspan></text>
<rect x="1023.4" y="355.5" width="35.9" height="14.2" stroke="#840000" stroke-width="2.1" fill="none"/>
<text x="1025" y="367.1" font-size="12.9" fill="#006464" textLength="32.4" lengthAdjust="spacingAndGlyphs">R330</text>
<text x="1041.3" y="381.1" font-size="12.9" fill="#006464" text-anchor="middle" textLength="15.4" lengthAdjust="spacingAndGlyphs">R1</text>
<line x1="1023.4" y1="362.6" x2="1006.6" y2="362.6" stroke="#840000" stroke-width="1.1"/>
<path d="M1006.6 353.8V371.4L997.3 362.6Z" stroke="#840000" stroke-width="1.1" fill="none"/>
<text x="961.9" y="366.9" font-size="12.9" fill="#006464" textLength="25.2" lengthAdjust="spacingAndGlyphs">GND</text>
<text x="1120.2" y="402.2" font-size="12.9" fill="#006464" text-anchor="middle" textLength="16.4" lengthAdjust="spacingAndGlyphs">U3</text>
<text y="419.3" font-size="12.9" fill="#006464"><tspan x="1039" textLength="38.4" lengthAdjust="spacingAndGlyphs">EL817</tspan> <tspan x="1086.7" textLength="7.9" lengthAdjust="spacingAndGlyphs">-</tspan> <tspan x="1103.4" textLength="34.8" lengthAdjust="spacingAndGlyphs">Reset</tspan> <tspan x="1146.1" textLength="40.7" lengthAdjust="spacingAndGlyphs">Switch</tspan> <tspan x="1195.6" textLength="6.4" lengthAdjust="spacingAndGlyphs">1</tspan></text>
<rect x="1085" y="432.2" width="70.95" height="53.2" stroke="#840000" stroke-width="1.9" fill="#ffffc2"/>
<path d="M1067.1 441.5H1102.6V476.9H1059.4" stroke="#840000" stroke-width="1.1" fill="none"/>
<polygon points="1097.8,454.4 1107.4,454.4 1102.6,462.1" fill="#ffffc2" stroke="#840000" stroke-width="2" stroke-linejoin="miter"/>
<line x1="1096.8" y1="463" x2="1108.2" y2="463" stroke="#840000" stroke-width="2.2"/>
<line x1="1116" y1="455.7" x2="1125.2" y2="455.7" stroke="#840000" stroke-width="1"/>
<polygon points="1125.6,455.7 1121.8,454.2 1121.8,457.2" fill="#840000"/>
<line x1="1116" y1="462.5" x2="1125.2" y2="462.5" stroke="#840000" stroke-width="1"/>
<polygon points="1125.6,462.5 1121.8,461 1121.8,464" fill="#840000"/>
<line x1="1138.2" y1="446.1" x2="1138.2" y2="472.7" stroke="#840000" stroke-width="3.6" stroke-linecap="round"/>
<path d="M1139 452L1152.3 441.5H1173.8" stroke="#840000" stroke-width="1.1" fill="none"/>
<path d="M1139 466.8L1152.3 476.9H1173.8" stroke="#840000" stroke-width="1.1" fill="none"/>
<polygon points="1149.4,474.3 1141,471.3 1145.2,466.7" fill="#840000"/>
<text x="1076" y="439.4" font-size="12.9" fill="#a90000" text-anchor="middle">1</text>
<text x="1076" y="474.8" font-size="12.9" fill="#a90000" text-anchor="middle">2</text>
<text x="1164.4" y="439.4" font-size="12.9" fill="#a90000" text-anchor="middle">4</text>
<text x="1164.4" y="474.8" font-size="12.9" fill="#a90000" text-anchor="middle">3</text>
<polygon points="1067.1,441.5 1061,432.95 981.1,432.95 981.1,450.05 1061,450.05" fill="none" stroke="#840000" stroke-width="1.1"/>
<text x="988.9" y="445.9" font-size="12.9" fill="#840000" textLength="67" lengthAdjust="spacingAndGlyphs">ResetSW<tspan dy="-1.7">_</tspan><tspan dy="1.7">1</tspan></text>
<polygon points="1173.8,441.5 1180.1,432.95 1252.9,432.95 1252.9,450.05 1180.1,450.05" fill="none" stroke="#840000" stroke-width="1.1"/>
<text x="1185.1" y="445.9" font-size="12.9" fill="#840000" textLength="60.1" lengthAdjust="spacingAndGlyphs">Reset+<tspan dy="-1.7">_</tspan><tspan dy="1.7">1</tspan></text>
<polygon points="1173.8,476.9 1180.1,468.35 1252.9,468.35 1252.9,485.45 1180.1,485.45" fill="none" stroke="#840000" stroke-width="1.1"/>
<text x="1185.1" y="481.3" font-size="12.9" fill="#840000" textLength="60.1" lengthAdjust="spacingAndGlyphs">Reset-<tspan dy="-1.7">_</tspan><tspan dy="1.7">1</tspan></text>
<rect x="1023.4" y="469.8" width="35.9" height="14.2" stroke="#840000" stroke-width="2.1" fill="none"/>
<text x="1025" y="481.4" font-size="12.9" fill="#006464" textLength="32.4" lengthAdjust="spacingAndGlyphs">R330</text>
<text x="1041.3" y="495.4" font-size="12.9" fill="#006464" text-anchor="middle" textLength="15.4" lengthAdjust="spacingAndGlyphs">R2</text>
<line x1="1023.4" y1="476.9" x2="1006.6" y2="476.9" stroke="#840000" stroke-width="1.1"/>
<path d="M1006.6 468.1V485.7L997.3 476.9Z" stroke="#840000" stroke-width="1.1" fill="none"/>
<text x="961.9" y="481.2" font-size="12.9" fill="#006464" textLength="25.2" lengthAdjust="spacingAndGlyphs">GND</text>
<text x="1111.8" y="515.9" font-size="12.9" fill="#006464" text-anchor="middle" textLength="12.6" lengthAdjust="spacingAndGlyphs">J1</text>
<text y="534.1" font-size="12.9" fill="#006464"><tspan x="1070.3" textLength="16.9" lengthAdjust="spacingAndGlyphs">PC</tspan> <tspan x="1095.4" textLength="42" lengthAdjust="spacingAndGlyphs">Header</tspan> <tspan x="1145.2" textLength="7.8" lengthAdjust="spacingAndGlyphs">1</tspan></text>
<rect x="1094.1" y="547.05" width="35" height="53" stroke="#840000" stroke-width="1.9" fill="#ffffc2"/>
<rect x="1094.1" y="554.6" width="8.8" height="1.8" stroke="#840000" stroke-width="0.9" fill="none"/>
<rect x="1120.2" y="554.6" width="8.8" height="1.8" stroke="#840000" stroke-width="0.9" fill="none"/>
<line x1="1067.4" y1="555.5" x2="1093.8" y2="555.5" stroke="#840000" stroke-width="1.1"/>
<text x="1080.2" y="553.3" font-size="12.9" fill="#a90000" text-anchor="middle">1</text>
<text x="1142.2" y="553.3" font-size="12.9" fill="#a90000" text-anchor="middle">2</text>
<polygon points="1067.4,555.5 1061.3,546.75 985.4,546.75 985.4,564.25 1061.3,564.25" fill="none" stroke="#840000" stroke-width="1.1"/>
<text x="993.2" y="559.9" font-size="12.9" fill="#840000" textLength="63" lengthAdjust="spacingAndGlyphs">Power+<tspan dy="-1.7">_</tspan><tspan dy="1.7">1</tspan></text>
<line x1="1129.2" y1="555.5" x2="1156.6" y2="555.5" stroke="#840000" stroke-width="1.1"/>
<polygon points="1156.6,555.5 1162.9,546.75 1237.7,546.75 1237.7,564.25 1162.9,564.25" fill="none" stroke="#840000" stroke-width="1.1"/>
<text x="1167.9" y="559.9" font-size="12.9" fill="#840000" textLength="62.1" lengthAdjust="spacingAndGlyphs">Power-<tspan dy="-1.7">_</tspan><tspan dy="1.7">1</tspan></text>
<rect x="1094.1" y="572.2" width="8.8" height="1.8" stroke="#840000" stroke-width="0.9" fill="none"/>
<rect x="1120.2" y="572.2" width="8.8" height="1.8" stroke="#840000" stroke-width="0.9" fill="none"/>
<line x1="1067.4" y1="573.1" x2="1093.8" y2="573.1" stroke="#840000" stroke-width="1.1"/>
<text x="1080.2" y="570.9" font-size="12.9" fill="#a90000" text-anchor="middle">3</text>
<text x="1142.2" y="570.9" font-size="12.9" fill="#a90000" text-anchor="middle">4</text>
<polygon points="1067.4,573.1 1061.3,564.35 988.4,564.35 988.4,581.85 1061.3,581.85" fill="none" stroke="#840000" stroke-width="1.1"/>
<text x="996.2" y="577.5" font-size="12.9" fill="#840000" textLength="60" lengthAdjust="spacingAndGlyphs">Reset+<tspan dy="-1.7">_</tspan><tspan dy="1.7">1</tspan></text>
<line x1="1129.2" y1="573.1" x2="1156.6" y2="573.1" stroke="#840000" stroke-width="1.1"/>
<polygon points="1156.6,573.1 1162.9,564.35 1234.4,564.35 1234.4,581.85 1162.9,581.85" fill="none" stroke="#840000" stroke-width="1.1"/>
<text x="1167.9" y="577.5" font-size="12.9" fill="#840000" textLength="58.8" lengthAdjust="spacingAndGlyphs">Reset-<tspan dy="-1.7">_</tspan><tspan dy="1.7">1</tspan></text>
<rect x="1094.1" y="589.8" width="8.8" height="1.8" stroke="#840000" stroke-width="0.9" fill="#840000"/>
<rect x="1120.2" y="589.8" width="8.8" height="1.8" stroke="#840000" stroke-width="0.9" fill="#840000"/>
<line x1="1067.4" y1="590.7" x2="1093.8" y2="590.7" stroke="#840000" stroke-width="1.1"/>
<text x="1080.2" y="588.5" font-size="12.9" fill="#a90000" text-anchor="middle">5</text>
<text x="1142.2" y="588.5" font-size="12.9" fill="#a90000" text-anchor="middle">6</text>
<polygon points="1067.4,590.7 1061.3,581.95 1011.4,581.95 1011.4,599.45 1061.3,599.45" fill="none" stroke="#840000" stroke-width="1.1"/>
<text x="1019.2" y="595.1" font-size="12.9" fill="#840000" textLength="37" lengthAdjust="spacingAndGlyphs">LED<tspan dy="-1.7">_</tspan><tspan dy="1.7">1</tspan></text>
<line x1="1129.2" y1="590.7" x2="1164.7" y2="590.7" stroke="#840000" stroke-width="1.1"/>
<path d="M1164.7 582.4V599L1173.7 590.7Z" stroke="#840000" stroke-width="1.1" fill="none"/>
<text x="1183.9" y="595.1" font-size="12.9" fill="#006464" textLength="25" lengthAdjust="spacingAndGlyphs">GND</text>
<rect x="1313.4" y="248.4" width="343.3" height="386.8" stroke="#0000c2" stroke-width="1.05" fill="none"/>
<text transform="scale(0.82 1)" x="1599.6 1615.82 1629.45 1643.28 1652.58 1668.12 1685.28 1703.3" y="241.1" font-size="20.6" fill="#0000c2" stroke="#f5f4ef" stroke-width="0.3">System 2</text>
<text x="1490.2" y="287.9" font-size="12.9" fill="#006464" text-anchor="middle" textLength="16.4" lengthAdjust="spacingAndGlyphs">U4</text>
<text y="305" font-size="12.9" fill="#006464"><tspan x="1407.4" textLength="38.8" lengthAdjust="spacingAndGlyphs">EL817</tspan> <tspan x="1454.8" textLength="8.4" lengthAdjust="spacingAndGlyphs">-</tspan> <tspan x="1472.3" textLength="37.9" lengthAdjust="spacingAndGlyphs">Power</tspan> <tspan x="1517.7" textLength="41.1" lengthAdjust="spacingAndGlyphs">Switch</tspan> <tspan x="1566.8" textLength="6.4" lengthAdjust="spacingAndGlyphs">2</tspan></text>
<rect x="1455" y="317.9" width="70.95" height="53.2" stroke="#840000" stroke-width="1.9" fill="#ffffc2"/>
<path d="M1437.1 327.2H1472.6V362.6H1429.4" stroke="#840000" stroke-width="1.1" fill="none"/>
<polygon points="1467.8,340.1 1477.4,340.1 1472.6,347.8" fill="#ffffc2" stroke="#840000" stroke-width="2" stroke-linejoin="miter"/>
<line x1="1466.8" y1="348.7" x2="1478.2" y2="348.7" stroke="#840000" stroke-width="2.2"/>
<line x1="1486" y1="341.4" x2="1495.2" y2="341.4" stroke="#840000" stroke-width="1"/>
<polygon points="1495.6,341.4 1491.8,339.9 1491.8,342.9" fill="#840000"/>
<line x1="1486" y1="348.2" x2="1495.2" y2="348.2" stroke="#840000" stroke-width="1"/>
<polygon points="1495.6,348.2 1491.8,346.7 1491.8,349.7" fill="#840000"/>
<line x1="1508.2" y1="331.8" x2="1508.2" y2="358.4" stroke="#840000" stroke-width="3.6" stroke-linecap="round"/>
<path d="M1509 337.7L1522.3 327.2H1543.8" stroke="#840000" stroke-width="1.1" fill="none"/>
<path d="M1509 352.5L1522.3 362.6H1543.8" stroke="#840000" stroke-width="1.1" fill="none"/>
<polygon points="1519.4,360 1511,357 1515.2,352.4" fill="#840000"/>
<text x="1446" y="325.1" font-size="12.9" fill="#a90000" text-anchor="middle">1</text>
<text x="1446" y="360.5" font-size="12.9" fill="#a90000" text-anchor="middle">2</text>
<text x="1534.4" y="325.1" font-size="12.9" fill="#a90000" text-anchor="middle">4</text>
<text x="1534.4" y="360.5" font-size="12.9" fill="#a90000" text-anchor="middle">3</text>
<polygon points="1437.1,327.2 1431,318.65 1347.2,318.65 1347.2,335.75 1431,335.75" fill="none" stroke="#840000" stroke-width="1.1"/>
<text x="1355" y="331.6" font-size="12.9" fill="#840000" textLength="70.9" lengthAdjust="spacingAndGlyphs">PowerSW<tspan dy="-1.7">_</tspan><tspan dy="1.7">2</tspan></text>
<polygon points="1543.8,327.2 1550.1,318.65 1624.9,318.65 1624.9,335.75 1550.1,335.75" fill="none" stroke="#840000" stroke-width="1.1"/>
<text x="1555.1" y="331.6" font-size="12.9" fill="#840000" textLength="62.1" lengthAdjust="spacingAndGlyphs">Power+<tspan dy="-1.7">_</tspan><tspan dy="1.7">2</tspan></text>
<polygon points="1543.8,362.6 1550.1,354.05 1624.9,354.05 1624.9,371.15 1550.1,371.15" fill="none" stroke="#840000" stroke-width="1.1"/>
<text x="1555.1" y="367" font-size="12.9" fill="#840000" textLength="62.1" lengthAdjust="spacingAndGlyphs">Power-<tspan dy="-1.7">_</tspan><tspan dy="1.7">2</tspan></text>
<rect x="1393.4" y="355.5" width="35.9" height="14.2" stroke="#840000" stroke-width="2.1" fill="none"/>
<text x="1395" y="367.1" font-size="12.9" fill="#006464" textLength="32.4" lengthAdjust="spacingAndGlyphs">R330</text>
<text x="1411.3" y="381.1" font-size="12.9" fill="#006464" text-anchor="middle" textLength="15.4" lengthAdjust="spacingAndGlyphs">R3</text>
<line x1="1393.4" y1="362.6" x2="1376.6" y2="362.6" stroke="#840000" stroke-width="1.1"/>
<path d="M1376.6 353.8V371.4L1367.3 362.6Z" stroke="#840000" stroke-width="1.1" fill="none"/>
<text x="1331.9" y="366.9" font-size="12.9" fill="#006464" textLength="25.2" lengthAdjust="spacingAndGlyphs">GND</text>
<text x="1490.2" y="402.2" font-size="12.9" fill="#006464" text-anchor="middle" textLength="16.4" lengthAdjust="spacingAndGlyphs">U5</text>
<text y="419.3" font-size="12.9" fill="#006464"><tspan x="1409" textLength="38.4" lengthAdjust="spacingAndGlyphs">EL817</tspan> <tspan x="1456.7" textLength="7.9" lengthAdjust="spacingAndGlyphs">-</tspan> <tspan x="1473.4" textLength="34.8" lengthAdjust="spacingAndGlyphs">Reset</tspan> <tspan x="1516.1" textLength="40.7" lengthAdjust="spacingAndGlyphs">Switch</tspan> <tspan x="1565.6" textLength="6.4" lengthAdjust="spacingAndGlyphs">2</tspan></text>
<rect x="1455" y="432.2" width="70.95" height="53.2" stroke="#840000" stroke-width="1.9" fill="#ffffc2"/>
<path d="M1437.1 441.5H1472.6V476.9H1429.4" stroke="#840000" stroke-width="1.1" fill="none"/>
<polygon points="1467.8,454.4 1477.4,454.4 1472.6,462.1" fill="#ffffc2" stroke="#840000" stroke-width="2" stroke-linejoin="miter"/>
<line x1="1466.8" y1="463" x2="1478.2" y2="463" stroke="#840000" stroke-width="2.2"/>
<line x1="1486" y1="455.7" x2="1495.2" y2="455.7" stroke="#840000" stroke-width="1"/>
<polygon points="1495.6,455.7 1491.8,454.2 1491.8,457.2" fill="#840000"/>
<line x1="1486" y1="462.5" x2="1495.2" y2="462.5" stroke="#840000" stroke-width="1"/>
<polygon points="1495.6,462.5 1491.8,461 1491.8,464" fill="#840000"/>
<line x1="1508.2" y1="446.1" x2="1508.2" y2="472.7" stroke="#840000" stroke-width="3.6" stroke-linecap="round"/>
<path d="M1509 452L1522.3 441.5H1543.8" stroke="#840000" stroke-width="1.1" fill="none"/>
<path d="M1509 466.8L1522.3 476.9H1543.8" stroke="#840000" stroke-width="1.1" fill="none"/>
<polygon points="1519.4,474.3 1511,471.3 1515.2,466.7" fill="#840000"/>
<text x="1446" y="439.4" font-size="12.9" fill="#a90000" text-anchor="middle">1</text>
<text x="1446" y="474.8" font-size="12.9" fill="#a90000" text-anchor="middle">2</text>
<text x="1534.4" y="439.4" font-size="12.9" fill="#a90000" text-anchor="middle">4</text>
<text x="1534.4" y="474.8" font-size="12.9" fill="#a90000" text-anchor="middle">3</text>
<polygon points="1437.1,441.5 1431,432.95 1350.2,432.95 1350.2,450.05 1431,450.05" fill="none" stroke="#840000" stroke-width="1.1"/>
<text x="1358" y="445.9" font-size="12.9" fill="#840000" textLength="67.9" lengthAdjust="spacingAndGlyphs">ResetSW<tspan dy="-1.7">_</tspan><tspan dy="1.7">2</tspan></text>
<polygon points="1543.8,441.5 1550.1,432.95 1621.8,432.95 1621.8,450.05 1550.1,450.05" fill="none" stroke="#840000" stroke-width="1.1"/>
<text x="1555.1" y="445.9" font-size="12.9" fill="#840000" textLength="59" lengthAdjust="spacingAndGlyphs">Reset+<tspan dy="-1.7">_</tspan><tspan dy="1.7">2</tspan></text>
<polygon points="1543.8,476.9 1550.1,468.35 1621.8,468.35 1621.8,485.45 1550.1,485.45" fill="none" stroke="#840000" stroke-width="1.1"/>
<text x="1555.1" y="481.3" font-size="12.9" fill="#840000" textLength="59" lengthAdjust="spacingAndGlyphs">Reset-<tspan dy="-1.7">_</tspan><tspan dy="1.7">2</tspan></text>
<rect x="1393.4" y="469.8" width="35.9" height="14.2" stroke="#840000" stroke-width="2.1" fill="none"/>
<text x="1395" y="481.4" font-size="12.9" fill="#006464" textLength="32.4" lengthAdjust="spacingAndGlyphs">R330</text>
<text x="1411.3" y="495.4" font-size="12.9" fill="#006464" text-anchor="middle" textLength="15.4" lengthAdjust="spacingAndGlyphs">R4</text>
<line x1="1393.4" y1="476.9" x2="1376.6" y2="476.9" stroke="#840000" stroke-width="1.1"/>
<path d="M1376.6 468.1V485.7L1367.3 476.9Z" stroke="#840000" stroke-width="1.1" fill="none"/>
<text x="1331.9" y="481.2" font-size="12.9" fill="#006464" textLength="25.2" lengthAdjust="spacingAndGlyphs">GND</text>
<text x="1481.6" y="515.9" font-size="12.9" fill="#006464" text-anchor="middle" textLength="12.6" lengthAdjust="spacingAndGlyphs">J2</text>
<text y="534.1" font-size="12.9" fill="#006464"><tspan x="1440.1" textLength="16.9" lengthAdjust="spacingAndGlyphs">PC</tspan> <tspan x="1465.2" textLength="42" lengthAdjust="spacingAndGlyphs">Header</tspan> <tspan x="1515" textLength="7.8" lengthAdjust="spacingAndGlyphs">2</tspan></text>
<rect x="1463.9" y="547.05" width="35" height="53" stroke="#840000" stroke-width="1.9" fill="#ffffc2"/>
<rect x="1463.9" y="554.6" width="8.8" height="1.8" stroke="#840000" stroke-width="0.9" fill="none"/>
<rect x="1490" y="554.6" width="8.8" height="1.8" stroke="#840000" stroke-width="0.9" fill="none"/>
<line x1="1437.2" y1="555.5" x2="1463.6" y2="555.5" stroke="#840000" stroke-width="1.1"/>
<text x="1450" y="553.3" font-size="12.9" fill="#a90000" text-anchor="middle">1</text>
<text x="1512" y="553.3" font-size="12.9" fill="#a90000" text-anchor="middle">2</text>
<polygon points="1437.2,555.5 1431.1,546.75 1354.9,546.75 1354.9,564.25 1431.1,564.25" fill="none" stroke="#840000" stroke-width="1.1"/>
<text x="1362.7" y="559.9" font-size="12.9" fill="#840000" textLength="63.3" lengthAdjust="spacingAndGlyphs">Power+<tspan dy="-1.7">_</tspan><tspan dy="1.7">2</tspan></text>
<line x1="1499" y1="555.5" x2="1526.4" y2="555.5" stroke="#840000" stroke-width="1.1"/>
<polygon points="1526.4,555.5 1532.7,546.75 1606.8,546.75 1606.8,564.25 1532.7,564.25" fill="none" stroke="#840000" stroke-width="1.1"/>
<text x="1537.7" y="559.9" font-size="12.9" fill="#840000" textLength="61.4" lengthAdjust="spacingAndGlyphs">Power-<tspan dy="-1.7">_</tspan><tspan dy="1.7">2</tspan></text>
<rect x="1463.9" y="572.2" width="8.8" height="1.8" stroke="#840000" stroke-width="0.9" fill="none"/>
<rect x="1490" y="572.2" width="8.8" height="1.8" stroke="#840000" stroke-width="0.9" fill="none"/>
<line x1="1437.2" y1="573.1" x2="1463.6" y2="573.1" stroke="#840000" stroke-width="1.1"/>
<text x="1450" y="570.9" font-size="12.9" fill="#a90000" text-anchor="middle">3</text>
<text x="1512" y="570.9" font-size="12.9" fill="#a90000" text-anchor="middle">4</text>
<polygon points="1437.2,573.1 1431.1,564.35 1364.4,564.35 1364.4,581.85 1431.1,581.85" fill="none" stroke="#840000" stroke-width="1.1"/>
<text x="1372.2" y="577.5" font-size="12.9" fill="#840000" textLength="53.8" lengthAdjust="spacingAndGlyphs">Reset+2</text>
<line x1="1499" y1="573.1" x2="1526.4" y2="573.1" stroke="#840000" stroke-width="1.1"/>
<polygon points="1526.4,573.1 1532.7,564.35 1603.5,564.35 1603.5,581.85 1532.7,581.85" fill="none" stroke="#840000" stroke-width="1.1"/>
<text x="1537.7" y="577.5" font-size="12.9" fill="#840000" textLength="58.1" lengthAdjust="spacingAndGlyphs">Reset-<tspan dy="-1.7">_</tspan><tspan dy="1.7">2</tspan></text>
<rect x="1463.9" y="589.8" width="8.8" height="1.8" stroke="#840000" stroke-width="0.9" fill="#840000"/>
<rect x="1490" y="589.8" width="8.8" height="1.8" stroke="#840000" stroke-width="0.9" fill="#840000"/>
<line x1="1437.2" y1="590.7" x2="1463.6" y2="590.7" stroke="#840000" stroke-width="1.1"/>
<text x="1450" y="588.5" font-size="12.9" fill="#a90000" text-anchor="middle">5</text>
<text x="1512" y="588.5" font-size="12.9" fill="#a90000" text-anchor="middle">6</text>
<polygon points="1437.2,590.7 1431.1,581.95 1381.2,581.95 1381.2,599.45 1431.1,599.45" fill="none" stroke="#840000" stroke-width="1.1"/>
<text x="1389" y="595.1" font-size="12.9" fill="#840000" textLength="37" lengthAdjust="spacingAndGlyphs">LED<tspan dy="-1.7">_</tspan><tspan dy="1.7">2</tspan></text>
<line x1="1499" y1="590.7" x2="1534.5" y2="590.7" stroke="#840000" stroke-width="1.1"/>
<path d="M1534.5 582.4V599L1543.5 590.7Z" stroke="#840000" stroke-width="1.1" fill="none"/>
<text x="1553.7" y="595.1" font-size="12.9" fill="#006464" textLength="25" lengthAdjust="spacingAndGlyphs">GND</text>
<rect x="636.4" y="670.6" width="185.2" height="139.8" stroke="#0000c2" stroke-width="1.05" fill="none"/>
<text transform="scale(0.86 1)" x="739.68 751.84 762.22 767.94 778.68 786.52 796.55 808.98 812.4 822.78 835.6 846.06 859.22 870.42" y="665" font-size="15.4" fill="#0000c2">External Power</text>
<line x1="707.6" y1="696.6" x2="756.4" y2="696.6" stroke="#840000" stroke-width="1.1"/>
<path d="M760.2 693.3A3.3 3.3 0 0 0 760.2 699.9" stroke="#840000" stroke-width="1.1" fill="none"/>
<text x="737.4" y="694.8" font-size="12.9" fill="#a90000" text-anchor="middle">1</text>
<path d="M715.8 691.5L707.3 696.6L715.8 701.7" stroke="#840000" stroke-width="1.1" fill="none"/>
<text x="697.4" y="700.9" font-size="12.9" fill="#006464" text-anchor="end" textLength="41" lengthAdjust="spacingAndGlyphs">+12VA</text>
<line x1="715.8" y1="714.16" x2="756.4" y2="714.16" stroke="#840000" stroke-width="1.1"/>
<path d="M760.2 710.86A3.3 3.3 0 0 0 760.2 717.46" stroke="#840000" stroke-width="1.1" fill="none"/>
<text x="737.4" y="712.36" font-size="12.9" fill="#a90000" text-anchor="middle">2</text>
<path d="M715.8 705.86V722.46L707.3 714.16Z" stroke="#840000" stroke-width="1.1" fill="none"/>
<text x="697.4" y="718.46" font-size="12.9" fill="#006464" text-anchor="end" textLength="25" lengthAdjust="spacingAndGlyphs">GND</text>
<line x1="707.6" y1="731.72" x2="756.4" y2="731.72" stroke="#840000" stroke-width="1.1"/>
<path d="M760.2 728.42A3.3 3.3 0 0 0 760.2 735.02" stroke="#840000" stroke-width="1.1" fill="none"/>
<text x="737.4" y="729.92" font-size="12.9" fill="#a90000" text-anchor="middle">3</text>
<path d="M715.8 726.62L707.3 731.72L715.8 736.82" stroke="#840000" stroke-width="1.1" fill="none"/>
<text x="697.4" y="736.02" font-size="12.9" fill="#006464" text-anchor="end" textLength="45" lengthAdjust="spacingAndGlyphs">+3.3VA</text>
<line x1="715.8" y1="749.28" x2="756.4" y2="749.28" stroke="#840000" stroke-width="1.1"/>
<path d="M760.2 745.98A3.3 3.3 0 0 0 760.2 752.58" stroke="#840000" stroke-width="1.1" fill="none"/>
<text x="737.4" y="747.48" font-size="12.9" fill="#a90000" text-anchor="middle">4</text>
<path d="M715.8 740.98V757.58L707.3 749.28Z" stroke="#840000" stroke-width="1.1" fill="none"/>
<text x="697.4" y="753.58" font-size="12.9" fill="#006464" text-anchor="end" textLength="25" lengthAdjust="spacingAndGlyphs">GND</text>
<line x1="707.6" y1="766.84" x2="756.4" y2="766.84" stroke="#840000" stroke-width="1.1"/>
<path d="M760.2 763.54A3.3 3.3 0 0 0 760.2 770.14" stroke="#840000" stroke-width="1.1" fill="none"/>
<text x="737.4" y="765.04" font-size="12.9" fill="#a90000" text-anchor="middle">5</text>
<path d="M715.8 761.74L707.3 766.84L715.8 771.94" stroke="#840000" stroke-width="1.1" fill="none"/>
<text x="697.4" y="771.14" font-size="12.9" fill="#006464" text-anchor="end" textLength="32.2" lengthAdjust="spacingAndGlyphs">+5VA</text>
<line x1="715.8" y1="784.4" x2="756.4" y2="784.4" stroke="#840000" stroke-width="1.1"/>
<path d="M760.2 781.1A3.3 3.3 0 0 0 760.2 787.7" stroke="#840000" stroke-width="1.1" fill="none"/>
<text x="737.4" y="782.6" font-size="12.9" fill="#a90000" text-anchor="middle">6</text>
<path d="M715.8 776.1V792.7L707.3 784.4Z" stroke="#840000" stroke-width="1.1" fill="none"/>
<text x="697.4" y="788.7" font-size="12.9" fill="#006464" text-anchor="end" textLength="25" lengthAdjust="spacingAndGlyphs">GND</text>
<text x="770" y="735.7" font-size="12.9" fill="#006464" textLength="13.6" lengthAdjust="spacingAndGlyphs">J5</text>
<text x="770" y="753.3" font-size="12.9" fill="#006464" textLength="38.6" lengthAdjust="spacingAndGlyphs">Power</text>
<rect x="847.3" y="670.4" width="484.4" height="192.7" stroke="#0000c2" stroke-width="1.05" fill="none"/>
<text transform="scale(0.86 1)" x="984.17 999.21 1010.38 1020.82 1032.1 1038.53 1044.54 1055.77" y="664.8" font-size="15.4" fill="#0000c2">Mounting</text>
<path d="M1155.8 722.3H891.5V810.7H1155.8" stroke="#009600" stroke-width="1.3" fill="none"/>
<line x1="979.8" y1="706" x2="979.8" y2="722.6" stroke="#840000" stroke-width="1.1"/>
<circle cx="979.8" cy="697" r="8.8" fill="none" stroke="#840000" stroke-width="8.9"/>
<text x="999.2" y="692.2" font-size="12.9" fill="#006464" textLength="16" lengthAdjust="spacingAndGlyphs">H1</text>
<text x="999.4" y="709.8" font-size="12.9" fill="#006464" textLength="117.2" lengthAdjust="spacingAndGlyphs">MountingHole<tspan dy="-1.7">_</tspan><tspan dy="1.7">P</tspan>ad</text>
<line x1="1155.8" y1="706" x2="1155.8" y2="722.6" stroke="#840000" stroke-width="1.1"/>
<circle cx="1155.8" cy="697" r="8.8" fill="none" stroke="#840000" stroke-width="8.9"/>
<text x="1175.2" y="692.2" font-size="12.9" fill="#006464" textLength="16" lengthAdjust="spacingAndGlyphs">H2</text>
<text x="1175.4" y="709.8" font-size="12.9" fill="#006464" textLength="117.2" lengthAdjust="spacingAndGlyphs">MountingHole<tspan dy="-1.7">_</tspan><tspan dy="1.7">P</tspan>ad</text>
<line x1="979.8" y1="793.8" x2="979.8" y2="810.4" stroke="#840000" stroke-width="1.1"/>
<circle cx="979.8" cy="784.8" r="8.8" fill="none" stroke="#840000" stroke-width="8.9"/>
<text x="999.2" y="780" font-size="12.9" fill="#006464" textLength="16" lengthAdjust="spacingAndGlyphs">H4</text>
<text x="999.4" y="797.6" font-size="12.9" fill="#006464" textLength="117.2" lengthAdjust="spacingAndGlyphs">MountingHole<tspan dy="-1.7">_</tspan><tspan dy="1.7">P</tspan>ad</text>
<line x1="1155.8" y1="793.8" x2="1155.8" y2="810.4" stroke="#840000" stroke-width="1.1"/>
<circle cx="1155.8" cy="784.8" r="8.8" fill="none" stroke="#840000" stroke-width="8.9"/>
<text x="1175.2" y="780" font-size="12.9" fill="#006464" textLength="16" lengthAdjust="spacingAndGlyphs">H3</text>
<text x="1175.4" y="797.6" font-size="12.9" fill="#006464" textLength="117.2" lengthAdjust="spacingAndGlyphs">MountingHole<tspan dy="-1.7">_</tspan><tspan dy="1.7">P</tspan>ad</text>
<circle cx="979.8" cy="722.3" r="3.1" fill="#009600"/>
<circle cx="979.8" cy="810.7" r="3.1" fill="#009600"/>
<circle cx="891.5" cy="810.7" r="3.1" fill="#009600"/>
<line x1="891.5" y1="810.7" x2="891.5" y2="819" stroke="#840000" stroke-width="1.1"/>
<path d="M882.2 819H901L891.5 828.3Z" stroke="#840000" stroke-width="1.1" fill="none"/>
<text x="892" y="850.8" font-size="12.9" fill="#006464" text-anchor="middle" textLength="25" lengthAdjust="spacingAndGlyphs">GND</text>
</svg>
<g transform="translate(64 71.2)">
<path d="M1 .8H20L23 3.8V23H1Z" fill="#ded3dd"/>
<rect x="6.5" y="2.1" width="9.2" height="6" fill="#4a4a4a"/><rect x="11" y="3" width="3" height="4.2" fill="#ded3dd"/>
<rect x="4.9" y="12.1" width="13" height="8.4" fill="#4a4a4a"/>
</g>
<rect x="105.9" y="71.8" width="22.1" height="22.4" rx="4" fill="#d9cfb6"/>
<rect x="114.9" y="71.8" width="3.3" height="3.8" fill="#6e6e6e"/>
<path d="M116.5 75.4V81.6" stroke="#1c1c1c" stroke-width="1.4"/><path d="M116.5 77.2L118.9 79.6L116.5 82L114.1 79.6Z" fill="#1c1c1c"/>
<rect x="123.2" y="78.4" width="4.8" height="3" fill="#6e6e6e"/>
<path d="M105.9 87.7H111.6" stroke="#1c1c1c" stroke-width="1.2"/><rect x="111.3" y="83.8" width="1.6" height="8" fill="#1c1c1c"/><path d="M112.9 84.6L114.4 86.4L112.9 88.2Z" fill="#1c1c1c"/>
<circle cx="122" cy="87.4" r="6.1" fill="#fff"/>
<circle cx="122" cy="87.4" r="5.9" fill="none" stroke="#fff" stroke-width="3.4" stroke-dasharray="4.5 1.678" stroke-dashoffset="-0.839"/>
<circle cx="122" cy="87.4" r="3.75" fill="none" stroke="#ec5473" stroke-width="2.9"/>
<circle cx="122" cy="87.4" r="5.9" fill="none" stroke="#ec5473" stroke-width="1.9" stroke-dasharray="3.1 3.08" stroke-dashoffset="-1.545"/>
<circle cx="122" cy="87.4" r="2.4" fill="#fff"/><circle cx="122" cy="87.4" r="1.5" fill="#d9cfb6"/>
<g transform="translate(144.6 71.2)">
<path d="M3.9 1.4V19.2M2.4 1.4H5.3M2.4 19.2H5.3" stroke="#ded3dd" stroke-width="1.3" fill="none"/>
<path d="M7.15 1.65H16.3L20.75 5.7V19.15H7.15Z" fill="#4a4a4a" stroke="#ded3dd" stroke-width="1.3"/>
<path d="M16.3 1.65V5.7H20.75Z" fill="#ded3dd"/>
<path d="M7 22.4H20.9M7 20.9V23.9M20.9 20.9V23.9" stroke="#ded3dd" stroke-width="1.3" fill="none"/>
</g>
<g transform="translate(178 71.2)">
<rect x="4.6" y="1.6" width="14.9" height="5.6" fill="#4a4a4a" stroke="#ded3dd" stroke-width="1.3"/>
<rect x="-.1" y="5.9" width="24" height="10.9" rx="2.4" fill="#ded3dd"/>
<path d="M4.6 11.5H19.3V19.5L16.2 22.6H4.6Z" fill="#4a4a4a" stroke="#ded3dd" stroke-width="1.3"/>
<path d="M3.1 11.25H20.8" stroke="#5a5a5a" stroke-width=".7"/>
<path d="M19.3 19.5H16.2V22.6Z" fill="#ded3dd"/>
</g>
<g transform="translate(210 71.2)">
<rect x="6.6" y="1.6" width="11" height="3" fill="#4a4a4a" stroke="#ded3dd" stroke-width="1.3"/>
<rect x=".1" y="3.9" width="23.9" height="7.7" rx="1.2" fill="#ded3dd"/>
<path d="M2.1 8.2H22" stroke="#6a6a6a" stroke-width=".9"/>
<path d="M2.9 11V22.4M21.5 11V22.4M.1 22.4H5M19.1 22.4H24" stroke="#ded3dd" stroke-width="1.5" fill="none"/>
<path d="M6.9 8.7H17.2V15.6L14.6 18.2H6.9Z" fill="#4a4a4a"/>
<path d="M6.9 11.4V18.4H14.6L17.2 15.8V11.4" fill="none" stroke="#ded3dd" stroke-width="1.3"/>
<path d="M17.4 15.6H14.6V18.4Z" fill="#ded3dd"/>
</g>
<g transform="translate(252.5 71.2)">
<path d="M7 3.8L8.4 .9H12.9L14.3 3.8Z" fill="#ded3dd"/><path d="M8.6 2.9H12.7" stroke="#555" stroke-width=".9"/>
<rect x="3.25" y="4.45" width="14.5" height="16.9" fill="#8a8a8a" stroke="#ded3dd" stroke-width="1.3"/>
<rect x="9.35" y="7.45" width="11.5" height="14.7" fill="#4a4a4a" stroke="#ded3dd" stroke-width="1.3"/>
</g>
<g transform="translate(291.5 71.2)">
<path d="M3.5 -.1V7.4L9.7 9.1" fill="none" stroke="#ded3dd" stroke-width="1.9" stroke-linejoin="miter"/>
<path d="M3.8 7.7A8.9 8.9 0 1 1 4.3 17.1" fill="none" stroke="#ded3dd" stroke-width="1.9"/>
</g>
<g transform="translate(348.8 71.2) scale(-1 1)">
<path d="M3.5 -.1V7.4L9.7 9.1" fill="none" stroke="#807b81" stroke-width="1.9" stroke-linejoin="miter"/>
<path d="M3.8 7.7A8.9 8.9 0 1 1 4.3 17.1" fill="none" stroke="#807b81" stroke-width="1.9"/>
</g>
<circle cx="378.9" cy="81.1" r="8.2" fill="none" stroke="#ded3dd" stroke-width="1.7"/>
<path d="M373.2 87.1L366.6 93.7" stroke="#ded3dd" stroke-width="2.1"/>
<text x="378.95" y="85.2" font-size="12.2" fill="#ded3dd" text-anchor="middle" textLength="9.2" lengthAdjust="spacingAndGlyphs" font-weight="bold" stroke="#ded3dd" stroke-width=".3">A</text>
<text x="397.7" y="84" font-size="17.2" fill="#ded3dd" textLength="12" lengthAdjust="spacingAndGlyphs" font-weight="bold">A</text>
<text x="411.2" y="94" font-size="17" fill="#ded3dd" textLength="10.2" lengthAdjust="spacingAndGlyphs" font-weight="bold">B</text>
<path d="M403.2 83.6C403.4 87.4 404.6 88.8 409.2 88.8" fill="none" stroke="#ec5473" stroke-width="2.3"/>
<path d="M406.8 85.4L410.4 88.8L406.8 92.2" fill="none" stroke="#ec5473" stroke-width="2.3"/>
<path d="M439.6 81.4A10.6 10.6 0 0 1 459.6 78.6" fill="none" stroke="#ded3dd" stroke-width="2.1"/>
<path d="M460.5 73.1V79.1H454.2" fill="none" stroke="#ded3dd" stroke-width="2.1"/>
<path d="M460.2 86A10.6 10.6 0 0 1 440.4 88.6" fill="none" stroke="#ded3dd" stroke-width="2.1"/>
<path d="M439.5 93.4V87.6H446.1" fill="none" stroke="#ded3dd" stroke-width="2.1"/>
<circle cx="480" cy="81" r="8.2" fill="none" stroke="#ded3dd" stroke-width="1.7"/>
<path d="M485.9 87.1L492.4 93.7" stroke="#ded3dd" stroke-width="2.1" stroke-linecap="butt"/>
<circle cx="512.2" cy="81" r="8.2" fill="none" stroke="#ded3dd" stroke-width="1.7"/>
<path d="M518.1 87.1L524.6 93.7" stroke="#ded3dd" stroke-width="2.1" stroke-linecap="butt"/>
<circle cx="544.2" cy="81" r="8.2" fill="none" stroke="#ded3dd" stroke-width="1.7"/>
<path d="M550.1 87.1L556.6 93.7" stroke="#ded3dd" stroke-width="2.1" stroke-linecap="butt"/>
<circle cx="576.2" cy="81" r="8.2" fill="none" stroke="#ded3dd" stroke-width="1.7"/>
<path d="M582.1 87.1L588.6 93.7" stroke="#ded3dd" stroke-width="2.1" stroke-linecap="butt"/>
<circle cx="608.2" cy="81" r="8.2" fill="none" stroke="#ded3dd" stroke-width="1.7"/>
<path d="M614.1 87.1L620.6 93.7" stroke="#ded3dd" stroke-width="2.1" stroke-linecap="butt"/>
<path d="M475.6 81H484.4M480 76.6V85.4" stroke="#ded3dd" stroke-width="1.9"/>
<path d="M507.8 81H516.6" stroke="#ded3dd" stroke-width="1.9"/>
<path d="M540.3 76.6H545.6L548.2 79.2V85.6H540.3Z" fill="#d6d6d6"/>
<path d="M570.6 84.9L574.6 78.8L577 82L578.8 80.2L582 84.9Z" fill="#d6d6d6"/><circle cx="579.6" cy="77.4" r="1.4" fill="#d6d6d6"/>
<path d="M605.2 75.2V86.2L607.8 83.8L609.6 88L611.4 87.2L609.6 83.2H613.2Z" fill="#d6d6d6"/>
<path d="M639.8 83L649 72.2V78.9H661.9V86.8H649V93.7Z" fill="#3daee9"/>
<path d="M683.1 72.2L693.9 81.2H686.9V93.9H679.2V81.2H672.4Z" fill="#3daee9"/>
<path d="M726.1 83L717 72.2V78.9H704.1V86.8H717V93.7Z" fill="#3daee9"/>
<path d="M746.2 83.2V91.8H765.3Z" fill="#ded3dd"/>
<path d="M761.7 85.2C762 80.6 758.6 78 753.2 78.3" fill="none" stroke="#3daee9" stroke-width="1.8"/><path d="M756.2 74.8L752.4 78.4L756.2 81.8" fill="none" stroke="#3daee9" stroke-width="1.8"/>
<path d="M797.9 83.2V91.8H778.8Z" fill="#ded3dd"/>
<path d="M782.4 85.2C782.1 80.6 785.5 78 790.9 78.3" fill="none" stroke="#3daee9" stroke-width="1.8"/><path d="M787.9 74.8L791.7 78.4L787.9 81.8" fill="none" stroke="#3daee9" stroke-width="1.8"/>
<path d="M809.9 76.5L829.8 81.7H809.9Z" fill="#ded3dd"/><path d="M809.9 84.5H829.8L809.9 92.5Z" fill="#3daee9"/>
<path d="M851.1 76.8V92.5H841.8Z" fill="#ded3dd"/><path d="M853.2 76.8L861.8 92.5H853.2Z" fill="#3daee9"/>
<path d="M884.9 71.6V94.6L904 83Z" fill="none" stroke="#ded3dd" stroke-width="1.8"/>
<path d="M880.9 77.1H884.9M880.9 89.1H884.9M903.4 83H905.4" stroke="#ded3dd" stroke-width="2" fill="none"/>
<path d="M887.7 79.6H891.7M887.5 85.8H891.7M889.6 83.5V88.1" stroke="#ded3dd" stroke-width="1.4" fill="none"/>
<circle cx="898.1" cy="87.8" r="6.9" fill="#ec5473"/>
<path d="M896.1 89.9L901.9 84.1" stroke="#fff" stroke-width="2.8" stroke-linecap="butt"/>
<path d="M894.1 91.9l0.5 -2.6l2.1 2.1z" fill="#fff"/>
<rect x="914" y="72.9" width="4.8" height="20" fill="#ded3dd"/>
<path d="M914.7 75.4h3.4M914.7 77.4h3.4M914.7 79.4h3.4M914.7 89.5h3.4" stroke="#8e8a8e" stroke-width=".9"/>
<rect x="920.2" y="72.9" width="4.8" height="20" fill="#ded3dd"/>
<path d="M920.9 75.4h3.4M920.9 77.4h3.4M920.9 79.4h3.4M920.9 89.5h3.4" stroke="#8e8a8e" stroke-width=".9"/>
<path d="M926.1 73.4L930.5 72.2L936.6 91.4L932.2 92.8Z" fill="#3daee9"/>
<path d="M928 76.2l2.4-.7M928.8 78.6l2.4-.7" stroke="#9ac8c0" stroke-width="1"/>
<circle cx="928.8" cy="86.2" r="4.9" fill="#d2d2d2"/><path d="M928.8 81.3A4.9 4.9 0 0 1 928.8 91.1Z" fill="#b9e2f2"/>
<circle cx="928.8" cy="86.2" r="4.9" fill="none" stroke="#ec5473" stroke-width="1.7"/>
<path d="M932.6 90.1L936.2 93.8" stroke="#ec5473" stroke-width="2.3" stroke-linecap="round"/>
<path d="M945.7 75H968.3V91.5H945.7V86A3.2 3.2 0 0 0 945.7 79.6Z" fill="none" stroke="#ded3dd" stroke-width="1.4"/>
<rect x="947.8" y="72.2" width="5.4" height="5.4" fill="#3daee9"/><rect x="947.8" y="88" width="5.4" height="6.8" fill="#3daee9"/>
<rect x="954.9" y="72.2" width="5.4" height="5.4" fill="#3daee9"/><rect x="954.9" y="88" width="5.4" height="6.8" fill="#3daee9"/>
<rect x="962" y="72.2" width="5.4" height="5.4" fill="#3daee9"/><rect x="962" y="88" width="5.4" height="6.8" fill="#3daee9"/>
<circle cx="962" cy="88.2" r="6.9" fill="#ec5473"/>
<path d="M960 90.3L965.8 84.5" stroke="#fff" stroke-width="2.8" stroke-linecap="butt"/>
<path d="M958 92.3l0.5 -2.6l2.1 2.1z" fill="#fff"/>
<rect x="987.1" y="70.9" width="21.7" height="9.9" fill="#ded3dd"/>
<text x="997.8" y="79.6" font-size="10.9" fill="#4e4e4e" text-anchor="middle" textLength="16.5" lengthAdjust="spacingAndGlyphs">R??</text>
<rect x="987.1" y="85.2" width="21.7" height="9.5" fill="#1b70a8"/>
<text x="998.2" y="93.8" font-size="10.6" fill="#ffffff" text-anchor="middle" textLength="18.5" lengthAdjust="spacingAndGlyphs">R42</text>
<path d="M998 80.8V82.8" stroke="#ec5473" stroke-width="2.2"/><path d="M994.2 82.2h7.6l-3.8 4.9z" fill="#ec5473"/>
<rect x="1020.5" y="73.4" width="3.9" height="3.9" fill="#3a3a3a" stroke="#ded3dd" stroke-width="1.25"/>
<rect x="1020.5" y="80.3" width="3.9" height="3.9" fill="#3a3a3a" stroke="#ded3dd" stroke-width="1.25"/>
<rect x="1020.5" y="87.4" width="3.9" height="3.9" fill="#3a3a3a" stroke="#ded3dd" stroke-width="1.25"/>
<path d="M1027 75.4H1037.1M1027 82.4H1030.4M1027 89.4H1028.4" stroke="#ded3dd" stroke-width="1.4"/>
<circle cx="1035.1" cy="88.2" r="6.9" fill="#ec5473"/>
<path d="M1031.4 88L1034.2 90.9L1038.9 85.8" fill="none" stroke="#fff" stroke-width="2.2"/>
<circle cx="1062.2" cy="83.6" r="11.3" fill="#fdfdfd" stroke="#ded3dd" stroke-width="1.2"/>
<path d="M1051.5 83.5H1073M1055.3 74V93" stroke="#ead0d8" stroke-width=".8"/>
<path d="M1053.3 85.4C1054.3 80 1055.6 78.4 1056.8 78.6S1058.2 86.5 1059.4 86.5S1061.4 75.4 1062.7 75.4S1064.6 90.4 1065.9 90.4S1068 85.6 1069.2 83.8" fill="none" stroke="#3daee9" stroke-width="1.9" stroke-linecap="round"/>
<path d="M1092.5 71.6V82.8L1104.4 77.3Z" fill="#2f3e50" stroke="#ded3dd" stroke-width="1.2"/>
<path d="M1090.1 73.5H1092.5M1090.1 81.2H1092.5M1104 77.3H1105.4" stroke="#ded3dd" stroke-width="1.2"/>
<path d="M1094.4 74.6h2M1094.6 79.4h2M1095.6 78.4v2" stroke="#ded3dd" stroke-width=".8"/>
<rect x="1082.4" y="86.4" width="11.6" height="4.6" fill="#2f3e50" stroke="#ded3dd" stroke-width="1"/>
<rect x="1083.8" y="83.3" width="3" height="3.2" fill="#3daee9"/><rect x="1083.8" y="91.4" width="3" height="3.4" fill="#3daee9"/>
<rect x="1088" y="83.3" width="3" height="3.2" fill="#3daee9"/><rect x="1088" y="91.4" width="3" height="3.4" fill="#3daee9"/>
<rect x="1092.1" y="83.3" width="3" height="3.2" fill="#3daee9"/><rect x="1092.1" y="91.4" width="3" height="3.4" fill="#3daee9"/>
<circle cx="1099.2" cy="88.2" r="7.1" fill="#ec5473"/>
<g transform="rotate(42 1099.2 88.2)" fill="none" stroke="#fff" stroke-width="1.4"><rect x="1093.2" y="86" width="6.4" height="4.4" rx="2.2"/><rect x="1098.8" y="86" width="6.4" height="4.4" rx="2.2"/></g>
<rect x="1115.3" y="72.1" width="21.7" height="21.7" fill="#ded3dd"/>
<rect x="1116.3" y="75.4" width="1.4" height="2.5" fill="#8c8c8c"/>
<rect x="1116.3" y="79.3" width="1.4" height="3.5" fill="#4a4a4a"/>
<rect x="1116.3" y="84.6" width="1.4" height="3.5" fill="#4a4a4a"/>
<rect x="1116.3" y="89.7" width="1.4" height="3.5" fill="#4a4a4a"/>
<rect x="1118.7" y="75.4" width="5.4" height="2.5" fill="#8c8c8c"/>
<rect x="1118.7" y="79.3" width="5.4" height="3.5" fill="#4a4a4a"/>
<rect x="1118.7" y="84.6" width="5.4" height="3.5" fill="#4a4a4a"/>
<rect x="1118.7" y="89.7" width="5.4" height="3.5" fill="#4a4a4a"/>
<rect x="1125" y="75.4" width="5.2" height="2.5" fill="#8c8c8c"/>
<rect x="1125" y="79.3" width="5.2" height="3.5" fill="#4a4a4a"/>
<rect x="1125" y="84.6" width="5.2" height="3.5" fill="#4a4a4a"/>
<rect x="1125" y="89.7" width="5.2" height="3.5" fill="#4a4a4a"/>
<rect x="1131.1" y="75.4" width="5.2" height="2.5" fill="#8c8c8c"/>
<rect x="1131.1" y="79.3" width="5.2" height="3.5" fill="#4a4a4a"/>
<rect x="1131.1" y="84.6" width="5.2" height="3.5" fill="#4a4a4a"/>
<rect x="1131.1" y="89.7" width="5.2" height="3.5" fill="#4a4a4a"/>
<rect x="1148.8" y="71.4" width="17.7" height="17.2" rx="2.6" fill="#d9d9d9"/>
<rect x="1145.8" y="74.7" width="19.2" height="7.5" fill="#1b70a8"/>
<text x="1146.2" y="81" font-size="8.6" fill="#ffffff" textLength="18.4" lengthAdjust="spacingAndGlyphs" font-weight="bold">.bom</text>
<circle cx="1163" cy="88.1" r="7" fill="#ec5473"/>
<path d="M1163 92.2V84.8M1159.7 87.8L1163 84.5L1166.3 87.8" fill="none" stroke="#fff" stroke-width="1.9"/>
<clipPath id="pcbc"><rect x="1187" y="70.7" width="24.1" height="24.3" rx="4"/></clipPath>
<g clip-path="url(#pcbc)"><rect x="1186" y="70" width="26" height="26" fill="#045a04"/>
<path d="M1193 70V79L1196.7 83V88L1193 91.6V96" fill="none" stroke="#43913f" stroke-width="2.2"/>
<path d="M1198 70V76.5L1201.8 80.2H1207" fill="none" stroke="#43913f" stroke-width="2"/>
<path d="M1201.9 70V73.4Q1201.9 76.2 1204.7 76.2H1212V70Z" fill="#43913f"/>
<path d="M1200.8 83.3H1204.8L1206 84.5H1212V96H1196.1V93.4L1200.8 88.6Z" fill="#43913f"/>
<rect x="1186" y="84.1" width="3" height="3" fill="#43913f"/>
<circle cx="1207.7" cy="80" r="2.5" fill="#e8871e"/><circle cx="1207.7" cy="80" r="1.05" fill="#fff"/>
<circle cx="1191.3" cy="85.5" r="2.5" fill="#e8871e"/><circle cx="1191.3" cy="85.5" r="1.05" fill="#fff"/>
</g>
<rect x="367.4" y="105.2" width="29" height="29" fill="#121a28" stroke="#2d4a78" stroke-width="1"/>
<rect x="367.4" y="137.3" width="29" height="29" fill="#121a28" stroke="#2d4a78" stroke-width="1"/>
<rect x="367.4" y="233.2" width="29" height="29" fill="#121a28" stroke="#2d4a78" stroke-width="1"/>
<rect x="367.4" y="379.5" width="29" height="29" fill="#121a28" stroke="#2d4a78" stroke-width="1"/>
<rect x="367.4" y="452.4" width="29" height="29" fill="#121a28" stroke="#2d4a78" stroke-width="1"/>
<rect x="367.4" y="493.4" width="29" height="29" fill="#121a28" stroke="#2d4a78" stroke-width="1"/>
<line x1="371.3" y1="300.5" x2="392.9" y2="300.5" stroke="#4a4a4a" stroke-width="1"/>
<line x1="371.3" y1="341.4" x2="392.9" y2="341.4" stroke="#4a4a4a" stroke-width="1"/>
<line x1="371.3" y1="446.5" x2="392.9" y2="446.5" stroke="#4a4a4a" stroke-width="1"/>
<line x1="371.3" y1="487.4" x2="392.9" y2="487.4" stroke="#4a4a4a" stroke-width="1"/>
<circle cx="372.8" cy="111" r="1.6" fill="#ded3dd"/>
<circle cx="372.8" cy="116.97" r="1.6" fill="#ded3dd"/>
<circle cx="372.8" cy="122.94" r="1.6" fill="#ded3dd"/>
<circle cx="372.8" cy="128.91" r="1.6" fill="#ded3dd"/>
<circle cx="378.77" cy="111" r="1.6" fill="#ded3dd"/>
<circle cx="378.77" cy="116.97" r="1.6" fill="#ded3dd"/>
<circle cx="378.77" cy="122.94" r="1.6" fill="#ded3dd"/>
<circle cx="378.77" cy="128.91" r="1.6" fill="#ded3dd"/>
<circle cx="384.74" cy="111" r="1.6" fill="#ded3dd"/>
<circle cx="384.74" cy="116.97" r="1.6" fill="#ded3dd"/>
<circle cx="384.74" cy="122.94" r="1.6" fill="#ded3dd"/>
<circle cx="384.74" cy="128.91" r="1.6" fill="#ded3dd"/>
<circle cx="390.71" cy="111" r="1.6" fill="#ded3dd"/>
<circle cx="390.71" cy="116.97" r="1.6" fill="#ded3dd"/>
<circle cx="390.71" cy="122.94" r="1.6" fill="#ded3dd"/>
<circle cx="390.71" cy="128.91" r="1.6" fill="#ded3dd"/>
<path d="M370.8 163.2L393.6 140.2" fill="none" stroke="#ded3dd" stroke-width="1.3"/>
<circle cx="372.8" cy="142.8" r="1.6" fill="#ded3dd"/>
<circle cx="378.77" cy="142.8" r="1.6" fill="#ded3dd"/>
<circle cx="384.74" cy="142.8" r="1.6" fill="#ded3dd"/>
<circle cx="372.8" cy="148.77" r="1.6" fill="#ded3dd"/>
<circle cx="378.77" cy="148.77" r="1.6" fill="#ded3dd"/>
<circle cx="372.8" cy="154.74" r="1.6" fill="#ded3dd"/>
<rect x="391.3" y="145.6" width="1.6" height="1.6" fill="#ded3dd"/>
<rect x="391.3" y="148.7" width="1.6" height="1.6" fill="#ded3dd"/>
<rect x="388.2" y="148.7" width="1.6" height="1.6" fill="#ded3dd"/>
<rect x="391.3" y="151.8" width="1.6" height="1.6" fill="#ded3dd"/>
<rect x="388.2" y="151.8" width="1.6" height="1.6" fill="#ded3dd"/>
<rect x="385.1" y="151.8" width="1.6" height="1.6" fill="#ded3dd"/>
<rect x="391.3" y="154.9" width="1.6" height="1.6" fill="#ded3dd"/>
<rect x="388.2" y="154.9" width="1.6" height="1.6" fill="#ded3dd"/>
<rect x="385.1" y="154.9" width="1.6" height="1.6" fill="#ded3dd"/>
<rect x="382" y="154.9" width="1.6" height="1.6" fill="#ded3dd"/>
<rect x="391.3" y="158" width="1.6" height="1.6" fill="#ded3dd"/>
<rect x="388.2" y="158" width="1.6" height="1.6" fill="#ded3dd"/>
<rect x="385.1" y="158" width="1.6" height="1.6" fill="#ded3dd"/>
<rect x="382" y="158" width="1.6" height="1.6" fill="#ded3dd"/>
<rect x="378.9" y="158" width="1.6" height="1.6" fill="#ded3dd"/>
<rect x="391.3" y="161.1" width="1.6" height="1.6" fill="#ded3dd"/>
<rect x="388.2" y="161.1" width="1.6" height="1.6" fill="#ded3dd"/>
<rect x="385.1" y="161.1" width="1.6" height="1.6" fill="#ded3dd"/>
<rect x="382" y="161.1" width="1.6" height="1.6" fill="#ded3dd"/>
<rect x="378.9" y="161.1" width="1.6" height="1.6" fill="#ded3dd"/>
<rect x="375.8" y="161.1" width="1.6" height="1.6" fill="#ded3dd"/>
<text x="382" y="184.8" font-size="13.2" fill="#ded3dd" text-anchor="middle" textLength="10.6" lengthAdjust="spacingAndGlyphs">in</text>
<path d="M375 189.2H389" fill="none" stroke="#ded3dd" stroke-width="1.3"/>
<path d="M371.8 189.2l4.6 -2.5v5zM392.2 189.2l-4.6 -2.5v5z" fill="#ded3dd"/>
<text x="382" y="216.5" font-size="13.2" fill="#ded3dd" text-anchor="middle" textLength="17.6" lengthAdjust="spacingAndGlyphs">mil</text>
<path d="M375 220.9H389" fill="none" stroke="#ded3dd" stroke-width="1.3"/>
<path d="M371.8 220.9l4.6 -2.5v5zM392.2 220.9l-4.6 -2.5v5z" fill="#ded3dd"/>
<text x="382" y="248.8" font-size="13.2" fill="#ded3dd" text-anchor="middle" textLength="22" lengthAdjust="spacingAndGlyphs">mm</text>
<path d="M375 253.2H389" fill="none" stroke="#ded3dd" stroke-width="1.3"/>
<path d="M371.8 253.2l4.6 -2.5v5zM392.2 253.2l-4.6 -2.5v5z" fill="#ded3dd"/>
<path d="M382.2 268.8V290.4M370.2 280.4H394" fill="none" stroke="#ded3dd" stroke-width="0.9"/>
<path d="M377.6 280.5H387.2M382.4 275.8V285.2" fill="none" stroke="#3daee9" stroke-width="2.9" stroke-linecap="round"/>
<path d="M382.6 281V291.2L385 289L386.8 292.8L388.4 292L386.6 288.4H390Z" fill="#ded3dd" stroke="#2b2b2b" stroke-width=".6"/>
<path d="M374.3 310.4V332.1L392.3 321.2Z" fill="none" stroke="#ded3dd" stroke-width="1.7"/>
<path d="M381.8 309.8V316M381.8 326.6V332.6" fill="none" stroke="#ec5473" stroke-width="1.9"/>
<path d="M370.6 315.4H374.3M370.6 326.8H374.3M392 321.2H394" fill="none" stroke="#ded3dd" stroke-width="1.7"/>
<path d="M376.6 317H381.2M376 323.6H380.8M378.4 321.2V326" fill="none" stroke="#ded3dd" stroke-width="1.3"/>
<path d="M373.9 351.2V372.6M371.3 370H392.9" fill="none" stroke="#ded3dd" stroke-width="1.8"/>
<path d="M375 368.3L381.5 355.1L385.5 363.9L391.4 358.4" fill="none" stroke="#ded3dd" stroke-width="1.1"/>
<path d="M373.9 383.5V405M371.3 401.7H392.9" fill="none" stroke="#ded3dd" stroke-width="1.8"/>
<path d="M373.9 394.4H381.5V401.7" fill="none" stroke="#ded3dd" stroke-width="1.1"/>
<path d="M373.9 415.2V436.4M371.3 433.8H392.9M372.6 434.8L389.4 418.4" fill="none" stroke="#ded3dd" stroke-width="1.8"/>
<path d="M373.9 426.5H381.5V433.8" fill="none" stroke="#ded3dd" stroke-width="1.1"/>
<rect x="371.3" y="455.2" width="21.6" height="9.8" fill="#ded3dd"/>
<text x="381.9" y="463.8" font-size="10.9" fill="#4e4e4e" text-anchor="middle" textLength="16.4" lengthAdjust="spacingAndGlyphs">R??</text>
<rect x="371.3" y="468.8" width="21.6" height="10.5" fill="#1b70a8"/>
<text x="382.3" y="478.4" font-size="10.6" fill="#ffffff" text-anchor="middle" textLength="18.4" lengthAdjust="spacingAndGlyphs">R42</text>
<path d="M382.1 465V467" stroke="#ec5473" stroke-width="2.2"/><path d="M378.3 466.4h7.6l-3.8 4.9z" fill="#ec5473"/>
<rect x="371.3" y="497.2" width="21.6" height="21.9" fill="#4e4e4e" stroke="#ded3dd" stroke-width="1.3"/>
<rect x="371.3" y="497.2" width="21.6" height="2.6" fill="#ded3dd"/>
<path d="M374.6 500.6V513.4H378.3M374.6 505H378.3" fill="none" stroke="#3daee9" stroke-width="1.5"/>
<rect x="378.3" y="502.7" width="12" height="4.7" fill="#5a5a5a" stroke="#ded3dd" stroke-width="1.2"/><rect x="378.3" y="511" width="12" height="4.7" fill="#5a5a5a" stroke="#ded3dd" stroke-width="1.2"/>
<path d="M391.6 530.4L385.6 537.2" fill="none" stroke="#ded3dd" stroke-width="3.4" stroke-linecap="round"/>
<path d="M385.4 537.6L372.6 549.6" fill="none" stroke="#ded3dd" stroke-width="1.5"/>
<path d="M377 536L389.6 548" fill="none" stroke="#3daee9" stroke-width="3.4" stroke-linecap="round"/>
<circle cx="375" cy="534" r="4" fill="#3daee9"/><path d="M370.6 529.4L375.6 534.2" stroke="#2b2b2b" stroke-width="3"/>
<circle cx="389.4" cy="547.8" r=".9" fill="#2b2b2b"/>
<rect x="1944.6" y="105.3" width="29" height="29" fill="#121a28" stroke="#2d4a78" stroke-width="1"/>
<line x1="1948" y1="172.9" x2="1969.7" y2="172.9" stroke="#4a4a4a" stroke-width="1"/>
<line x1="1948" y1="661.4" x2="1969.7" y2="661.4" stroke="#4a4a4a" stroke-width="1"/>
<path d="M1953.8 112.2V125.8L1957 122.9L1959.4 127.9L1961.6 126.9L1959.3 122H1963.9Z" fill="#ded3dd"/>
<path d="M1947.3 144.1H1953.2V155.7H1957.6" fill="none" stroke="#ded3dd" stroke-width="1.5"/>
<path d="M1965.5 140.6V163.5M1962 153.9H1971M1962 157.8H1971" fill="none" stroke="#ded3dd" stroke-width="1.5"/>
<path d="M1947.3 161.1H1959.8V148H1971" fill="none" stroke="#ec5473" stroke-width="1.7"/>
<path d="M1950.5 181.4V203.9L1967.6 192.6Z" fill="none" stroke="#ded3dd" stroke-width="1.5"/>
<path d="M1947.3 186.7H1950.5M1947.3 198.8H1950.5M1967.4 192.6H1971" fill="none" stroke="#ded3dd" stroke-width="1.5"/>
<path d="M1953.2 189.3H1957M1953.2 195.3H1957M1955.1 193.4V197.2" fill="none" stroke="#ded3dd" stroke-width="1.1"/>
<path d="M1958.9 214.2V226.9M1949 226.9H1968.6M1952.4 231.1H1965.2M1955.9 235H1961.7" fill="none" stroke="#ded3dd" stroke-width="1.6"/>
<path d="M1949.3 266.4L1968.6 247.8" fill="none" stroke="#ded3dd" stroke-width="1.5"/>
<path d="M1950.8 297L1967.4 280.8" fill="none" stroke="#3daee9" stroke-width="3.2" stroke-linecap="round"/>
<path d="M1967.6 309.9V332.3" fill="none" stroke="#ded3dd" stroke-width="3"/>
<path d="M1948 311.4H1958.3M1948 319.5H1957.8" fill="none" stroke="#ded3dd" stroke-width="1.6"/>
<path d="M1958.3 311.4L1967.9 321M1957.8 319.5L1967.9 328.8" fill="none" stroke="#3daee9" stroke-width="1.4"/>
<path d="M1947.3 352.9H1958.6" fill="none" stroke="#ded3dd" stroke-width="1.5"/>
<path d="M1953.5 347.5L1964.3 358.3M1953.5 358.3L1964.3 347.5" fill="none" stroke="#3daee9" stroke-width="1.5"/>
<path d="M1958.9 373.4V396.6M1947.3 384.7H1958.9" fill="none" stroke="#ded3dd" stroke-width="1.5"/>
<circle cx="1958.9" cy="384.7" r="4.2" fill="#3daee9"/>
<text x="1959.3" y="420.3" font-size="15" fill="#ded3dd" text-anchor="middle" textLength="10.4" lengthAdjust="spacingAndGlyphs">A</text>
<path d="M1948 422.9H1969.7" fill="none" stroke="#ded3dd" stroke-width="1.6"/>
<circle cx="1953.2" cy="445.9" r="2.8" fill="none" stroke="#ded3dd" stroke-width="1.5"/>
<path d="M1953.2 448.7V455.4" fill="none" stroke="#ded3dd" stroke-width="1.6"/>
<text x="1963.6" y="453" font-size="14.6" fill="#ded3dd" text-anchor="middle" textLength="9.4" lengthAdjust="spacingAndGlyphs" font-style="italic">A</text>
<clipPath id="rac"><path d="M1949.3 481.5H1955.5V471.4H1968.6V490.3H1949.3Z"/></clipPath>
<g clip-path="url(#rac)">
<path d="M1921.6 466L1949.6 494M1925.8 466L1953.8 494M1930 466L1958 494M1934.2 466L1962.2 494M1938.4 466L1966.4 494M1942.6 466L1970.6 494M1946.8 466L1974.8 494M1951 466L1979 494M1955.2 466L1983.2 494M1959.4 466L1987.4 494M1963.6 466L1991.6 494M1967.8 466L1995.8 494M1972 466L2000 494M1976.2 466L2004.2 494" fill="none" stroke="#ded3dd" stroke-width="1.5"/>
</g>
<path d="M1949.3 481.5H1955.5V471.4H1968.6V490.3H1949.3Z" fill="none" stroke="#ded3dd" stroke-width="1.4"/>
<path d="M1947.4 504.7H1963.2L1968.6 512.9L1963.2 521.3H1947.4Z" fill="none" stroke="#ded3dd" stroke-width="1.6"/>
<path d="M1968.6 512.9H1971.2" fill="none" stroke="#3daee9" stroke-width="1.5"/>
<text x="1955.3" y="517.9" font-size="14" fill="#ded3dd" text-anchor="middle" textLength="9.6" lengthAdjust="spacingAndGlyphs">A</text>
<text x="1952.9" y="550.4" font-size="15" fill="#ded3dd" text-anchor="middle" textLength="9.4" lengthAdjust="spacingAndGlyphs">A</text>
<path d="M1959.2 545L1963.5 540.7L1967.8 545L1963.5 549.3ZM1967.8 545H1971.2" fill="none" stroke="#ded3dd" stroke-width="1.5"/>
<rect x="1948" y="566.6" width="20.6" height="18.6" rx="2.6" fill="#d9cfb6"/>
<path d="M1948 575.6H1952.2M1952.2 570.6V580.6M1952.2 574L1957 570.4H1968.6M1952.2 577.4L1956.6 581" fill="none" stroke="#4a4a4a" stroke-width="1.2"/>
<circle cx="1964" cy="582.1" r="7.3" fill="#fff"/>
<circle cx="1964" cy="582.1" r="6.4" fill="#ec5473"/>
<path d="M1960.4 582.1H1967.6M1964 578.5V585.7" fill="none" stroke="#fff" stroke-width="1.9"/>
<path d="M1947.4 600.8H1963.2L1968.6 609L1963.2 617.6H1947.4ZM1968.6 609H1971.2" fill="none" stroke="#3daee9" stroke-width="1.6"/>
<text x="1955.3" y="614.1" font-size="14" fill="#ded3dd" text-anchor="middle" textLength="9.6" lengthAdjust="spacingAndGlyphs">A</text>
<rect x="1948" y="630.2" width="18.3" height="17.1" fill="#d9cfb6"/>
<text x="1952.4" y="639.6" font-size="10" fill="#4a4a4a" text-anchor="middle" textLength="6.6" lengthAdjust="spacingAndGlyphs">A</text>
<path d="M1957.6 635.2L1961 631.8L1964.4 635.2L1961 638.6Z" fill="none" stroke="#4a4a4a" stroke-width="1.1"/>
<circle cx="1964" cy="646.5" r="7.3" fill="#fff"/>
<circle cx="1964" cy="646.5" r="6.4" fill="#ec5473"/>
<path d="M1964 642.8V649.8M1960.9 647L1964 650.1L1967.1 647" fill="none" stroke="#fff" stroke-width="1.8"/>
<path d="M1950.8 672.5H1967.1V675.2H1960.9V691.9H1957V675.2H1950.8Z" fill="#ded3dd"/>
<rect x="1949.6" y="705.3" width="19" height="17.1" fill="#7c7c7c" stroke="#ded3dd" stroke-width="1.6"/>
<path d="M1953.6 710H1964M1953.6 713.4H1961.7M1953.6 716.7H1963.2" fill="none" stroke="#ded3dd" stroke-width="1.2"/>
<rect x="1947.4" y="734.3" width="23.6" height="23.2" fill="#ded3dd"/>
<rect x="1948.6" y="735.5" width="6.3" height="3.8" fill="#8c8c8c"/>
<rect x="1948.6" y="740.6" width="6.3" height="4.4" fill="#4a4a4a"/>
<rect x="1948.6" y="746.3" width="6.3" height="4.4" fill="#4a4a4a"/>
<rect x="1948.6" y="752" width="6.3" height="4.4" fill="#4a4a4a"/>
<rect x="1956.1" y="735.5" width="6.3" height="3.8" fill="#8c8c8c"/>
<rect x="1956.1" y="740.6" width="6.3" height="4.4" fill="#4a4a4a"/>
<rect x="1956.1" y="746.3" width="6.3" height="4.4" fill="#4a4a4a"/>
<rect x="1956.1" y="752" width="6.3" height="4.4" fill="#4a4a4a"/>
<rect x="1963.6" y="735.5" width="6.3" height="3.8" fill="#8c8c8c"/>
<rect x="1963.6" y="740.6" width="6.3" height="4.4" fill="#4a4a4a"/>
<rect x="1963.6" y="746.3" width="6.3" height="4.4" fill="#4a4a4a"/>
<rect x="1963.6" y="752" width="6.3" height="4.4" fill="#4a4a4a"/>
<rect x="1949.3" y="769.6" width="19.6" height="16.8" fill="#808080" stroke="#ded3dd" stroke-width="1.5"/>
<circle cx="1959" cy="810.1" r="9.4" fill="#808080" stroke="#ded3dd" stroke-width="1.5"/>
<path d="M1949.7 851.2A19 19 0 0 1 1968.9 832.5" fill="none" stroke="#ded3dd" stroke-width="1.5"/>
<path d="M1952.7 883.8C1951.6 876 1954.6 873.4 1958.7 873.2S1966 870 1965.2 864.2" fill="none" stroke="#ded3dd" stroke-width="1.5"/>
<path d="M1948.4 873.2H1968.9" fill="none" stroke="#3daee9" stroke-width="1.2"/>
<rect x="1947.2" y="872" width="2.4" height="2.4" fill="#3daee9"/><rect x="1967.7" y="872" width="2.4" height="2.4" fill="#3daee9"/><circle cx="1958.7" cy="873.2" r="1.5" fill="#fff" stroke="#3daee9" stroke-width=".8"/>
<path d="M1949.3 915.2L1968.9 896.5" fill="none" stroke="#ded3dd" stroke-width="1.5"/>
<rect x="1948.4" y="927.7" width="21.5" height="21.1" rx="3" fill="#ded3dd"/>
<path d="M1950.3 945.4L1955.9 937L1959.6 941.7L1962.8 938.9L1968 945.4Z" fill="#4a4a4a"/><circle cx="1962.4" cy="932.4" r="2.3" fill="#4a4a4a"/>
</svg></body></html>
